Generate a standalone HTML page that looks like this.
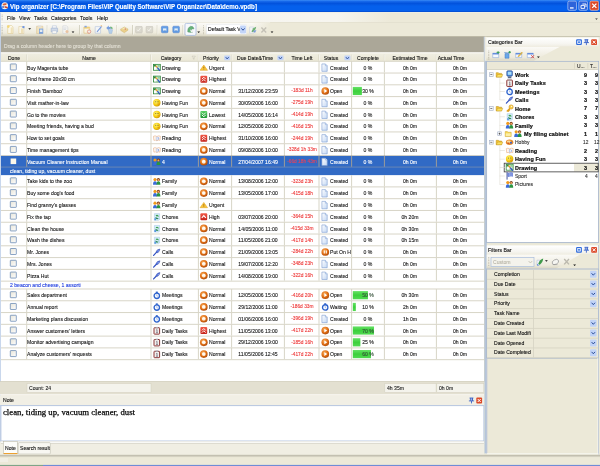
<!DOCTYPE html>
<html><head><meta charset="utf-8"><title>Vip organizer</title>
<style>
html,body{margin:0;padding:0;background:#ece9d8;}
body{width:600px;height:466px;overflow:hidden;position:relative;font-family:"Liberation Sans",sans-serif;font-size:5.6px;color:#1a1a1a;line-height:1;}
svg{position:absolute;left:0;top:0;}
#tx{position:absolute;left:0;top:0;width:600px;height:466px;will-change:transform;}
.t{position:absolute;white-space:nowrap;transform:scaleX(0.91);transform-origin:0 0;-webkit-text-stroke:0.12px;}
.c{transform:translateX(-50%) scaleX(0.91);transform-origin:50% 0;}
</style></head><body>
<svg width="600" height="466" viewBox="0 0 600 466">
<rect x="0.00" y="0.00" width="600.00" height="466.00" fill="#ece9d8"/>
<defs><linearGradient id="tb" x1="0" y1="0" x2="0" y2="1"><stop offset="0" stop-color="#3a8cf6"/><stop offset="0.12" stop-color="#1668ea"/><stop offset="0.28" stop-color="#0252dc"/><stop offset="0.5" stop-color="#0560ec"/><stop offset="0.88" stop-color="#0560ec"/><stop offset="1" stop-color="#0447c8"/></linearGradient><linearGradient id="mn" x1="0" y1="0" x2="1" y2="0"><stop offset="0" stop-color="#f7f6f1"/><stop offset="0.86" stop-color="#f6f5ef"/><stop offset="1" stop-color="#ece9d8"/></linearGradient><linearGradient id="fd" x1="0" y1="0" x2="1" y2="0"><stop offset="0" stop-color="#ece9d8" stop-opacity="0"/><stop offset="1" stop-color="#ece9d8"/></linearGradient><linearGradient id="tl" x1="0" y1="0" x2="0" y2="1"><stop offset="0" stop-color="#fbfaf7"/><stop offset="0.75" stop-color="#eeebdd"/><stop offset="1" stop-color="#d9d5c2"/></linearGradient><linearGradient id="pt" x1="0" y1="0" x2="0" y2="1"><stop offset="0" stop-color="#ffffff"/><stop offset="0.7" stop-color="#f6f5f0"/><stop offset="1" stop-color="#efede2"/></linearGradient><linearGradient id="hd" x1="0" y1="0" x2="0" y2="1"><stop offset="0" stop-color="#faf9f4"/><stop offset="0.2" stop-color="#efede0"/><stop offset="0.85" stop-color="#ebe8d7"/><stop offset="1" stop-color="#cfccba"/></linearGradient><radialGradient id="or" cx="0.4" cy="0.35" r="0.7"><stop offset="0" stop-color="#f9b060"/><stop offset="0.6" stop-color="#df6c12"/><stop offset="1" stop-color="#a8480a"/></radialGradient><radialGradient id="ye" cx="0.4" cy="0.35" r="0.7"><stop offset="0" stop-color="#fff678"/><stop offset="0.65" stop-color="#f4c808"/><stop offset="1" stop-color="#c89200"/></radialGradient><linearGradient id="rd" x1="0" y1="0" x2="0" y2="1"><stop offset="0" stop-color="#f25a48"/><stop offset="1" stop-color="#c4221a"/></linearGradient><linearGradient id="gr" x1="0" y1="0" x2="0" y2="1"><stop offset="0" stop-color="#58d064"/><stop offset="1" stop-color="#1e9632"/></linearGradient><linearGradient id="pb" x1="0" y1="0" x2="0" y2="1"><stop offset="0" stop-color="#66e266"/><stop offset="0.5" stop-color="#3cd03c"/><stop offset="1" stop-color="#52da52"/></linearGradient><linearGradient id="cbx" x1="0" y1="0" x2="1" y2="1"><stop offset="0" stop-color="#e6e4d8"/><stop offset="1" stop-color="#ffffff"/></linearGradient><linearGradient id="pg" x1="0" y1="0" x2="1" y2="1"><stop offset="0" stop-color="#ffffff"/><stop offset="1" stop-color="#c4d8f4"/></linearGradient></defs>
<rect x="0.00" y="0.00" width="600.00" height="12.10" fill="url(#tb)"/>
<rect x="0.00" y="12.00" width="600.00" height="0.80" fill="#f8f8f4"/>
<g transform="translate(1.50 2.00)"><ellipse cx="3.3" cy="3.8" rx="3.3" ry="3.5" fill="#f4f0ea"/><path d="M1 2.2 Q3 0.6 5.4 1.6 L4.6 3 L2 3.4 Z" fill="#d8603a"/><path d="M3.2 4 L6.4 5 L5.8 6.4 L3 5.4 Z" fill="#c8402a"/><circle cx="1.6" cy="5" r="1.1" fill="#5a78c8"/></g>
<rect x="567.80" y="1.10" width="8.70" height="9.20" fill="#2d63da" rx="1.4" stroke="#cfdcf8" stroke-width="0.6"/>
<rect x="578.80" y="1.10" width="8.70" height="9.20" fill="#2d63da" rx="1.4" stroke="#cfdcf8" stroke-width="0.6"/>
<rect x="589.90" y="1.10" width="8.70" height="9.20" fill="#dc4a2a" rx="1.4" stroke="#f6d8cc" stroke-width="0.6"/>
<rect x="570.00" y="7.30" width="3.60" height="1.30" fill="#ffffff"/>
<path d="M582.4 4 H586 V7 M581 5.4 H584.6 V8.4 H581 Z" fill="none" stroke="#fff" stroke-width="0.9"/>
<path d="M592.2 3.6 L596.4 7.9 M596.4 3.6 L592.2 7.9" stroke="#fff" stroke-width="1.3"/>
<rect x="0.00" y="12.50" width="600.00" height="9.80" fill="#ece9d8"/>
<rect x="0.00" y="12.70" width="392.00" height="9.50" fill="url(#mn)"/>
<rect x="0.00" y="22.10" width="600.00" height="0.60" fill="#d8d5c4"/>
<rect x="1.70" y="14.60" width="0.80" height="0.80" fill="#a8a594"/>
<rect x="1.70" y="16.20" width="0.80" height="0.80" fill="#a8a594"/>
<rect x="1.70" y="17.80" width="0.80" height="0.80" fill="#a8a594"/>
<rect x="1.70" y="19.40" width="0.80" height="0.80" fill="#a8a594"/>
<path d="M595.2 18.4 H597.8 L596.5 19.8 Z" fill="#222"/>
<rect x="0.00" y="22.60" width="600.00" height="13.60" fill="#ece9d8"/>
<rect x="0.00" y="22.60" width="270.00" height="13.60" fill="url(#tl)"/>
<rect x="252.00" y="22.60" width="18.20" height="13.60" fill="url(#fd)"/>
<rect x="0.00" y="36.00" width="600.00" height="1.00" fill="#c2beab"/>
<rect x="1.70" y="25.40" width="0.80" height="0.80" fill="#a8a594"/>
<rect x="1.70" y="27.00" width="0.80" height="0.80" fill="#a8a594"/>
<rect x="1.70" y="28.60" width="0.80" height="0.80" fill="#a8a594"/>
<rect x="1.70" y="30.20" width="0.80" height="0.80" fill="#a8a594"/>
<rect x="1.70" y="31.80" width="0.80" height="0.80" fill="#a8a594"/>
<rect x="1.70" y="33.40" width="0.80" height="0.80" fill="#a8a594"/>
<g transform="translate(6.70 25.00)" opacity="0.72"><path d="M1 0.5 H5 L6.3 2 V8.5 H1 Z" fill="#fffbea" stroke="#d9c07a" stroke-width="0.6"/><path d="M4 2.4 H5.8 V8 H4 Z" fill="#ecd79a" opacity=".8"/><circle cx="1.6" cy="1.6" r="1.3" fill="#f4cc4a"/></g>
<g transform="translate(18.00 25.00)" opacity="0.72"><path d="M0.8 1.5 H4.6 L5.8 2.8 V8.5 H0.8 Z" fill="#fdf8e6" stroke="#d6bf86" stroke-width="0.6"/><path d="M3 3.6 H5 V8 H3 Z" fill="#ead49a" opacity=".8"/><path d="M3.8 2.2 Q5 0.2 6.8 1.6 L6.2 3.4 Z" fill="#3a6fd8"/></g>
<path d="M28.30 28.20 H31.10 L29.70 29.70 Z" fill="#111"/>
<g transform="translate(35.80 25.00)" opacity="0.72"><path d="M0.8 1.2 H7 V8.6 H0.8 Z" fill="#f2deb0" stroke="#c8aa70" stroke-width="0.5"/><path d="M2.4 0.4 H5.4 V2 H2.4 Z" fill="#d8d8d8"/><path d="M3.2 3.6 H7.4 V8.8 H3.2 Z" fill="#4f86dc"/><path d="M4 4.6 H6.6 V7 H4 Z" fill="#dfeafa"/></g>
<rect x="46.80" y="25.00" width="0.70" height="9.50" fill="#c9c6b4"/>
<rect x="47.50" y="25.00" width="0.60" height="9.50" fill="#fbfaf6"/>
<g transform="translate(50.80 25.20)" opacity="0.72"><path d="M1.6 0.6 H5.6 V3 H1.6 Z" fill="#fff" stroke="#8ca4cc" stroke-width="0.5"/><path d="M0.4 3 H6.8 V6.6 H0.4 Z" fill="#c5d2ea" stroke="#6f8cc4" stroke-width="0.5"/><path d="M1.4 5.6 H5.8 V8.2 H1.4 Z" fill="#fff" stroke="#8ca4cc" stroke-width="0.5"/></g>
<g transform="translate(62.00 25.00)" opacity="0.72"><path d="M0.8 0.8 H4.6 L5.8 2 V8.4 H0.8 Z" fill="#f6f6f4" stroke="#b8bccc" stroke-width="0.5"/><circle cx="5" cy="6.4" r="1.5" fill="#e8b48a"/><path d="M1.6 3 H4.4 M1.6 4.4 H4" stroke="#a8b4cc" stroke-width="0.5"/></g>
<path d="M71.60 31.60 H74.40 L73.00 33.10 Z" fill="#111"/>
<rect x="79.30" y="25.00" width="0.70" height="9.50" fill="#c9c6b4"/>
<rect x="80.00" y="25.00" width="0.60" height="9.50" fill="#fbfaf6"/>
<g transform="translate(83.30 25.00)" opacity="0.72"><path d="M0.6 2 H6.4 V8.2 H0.6 Z" fill="#fbf6e0" stroke="#d8a850" stroke-width="0.6"/><path d="M0.6 2 H6.4 V3.6 H0.6 Z" fill="#f2c448"/><circle cx="5.8" cy="6.6" r="1.7" fill="#f4eee8" stroke="#d85a4a" stroke-width="0.7"/><path d="M1.2 0.8 H3.4 V2.4 H1.2 Z" fill="#5a88dc"/></g>
<g transform="translate(94.60 25.00)" opacity="0.72"><path d="M0.6 1.6 H6 V8.2 H0.6 Z" fill="#f6f8fc" stroke="#9ab0d8" stroke-width="0.6"/><path d="M2 6.4 L6.6 1 L7.4 1.8 L2.8 7.2 Z" fill="#4a7ad8"/><path d="M5.6 0.6 L7.4 0.2 L7.6 1.8 Z" fill="#e8a040"/></g>
<g transform="translate(105.80 25.00)" opacity="0.72"><path d="M0.4 3 L3 0.6 L3 2 H5 V4 H3 V5.4 Z" fill="#4a7fdc"/><path d="M7 3.4 L4.6 1.2 V2.6 H3.6" fill="#3aa04a"/><path d="M2.6 4.6 H6.8 L6 8.4 H3.4 Z" fill="#9fc4ee" stroke="#6a94d0" stroke-width="0.4"/><path d="M5.4 1.4 L7.2 3.2 L5.2 4 Z" fill="#3aa04a"/></g>
<rect x="116.00" y="25.00" width="0.70" height="9.50" fill="#c9c6b4"/>
<rect x="116.70" y="25.00" width="0.60" height="9.50" fill="#fbfaf6"/>
<g transform="translate(120.30 26.00)" opacity="0.72"><path d="M0.4 3.2 L4 1 L7.6 3 L4 5.6 Z" fill="#fae9a0" stroke="#b8923a" stroke-width="0.5"/><path d="M0.4 3.2 V4.4 L4 6.8 L7.6 4.2 V3" fill="#e8c46a" stroke="#b8923a" stroke-width="0.4"/><circle cx="5" cy="3" r="0.7" fill="#c84a3a"/></g>
<rect x="132.30" y="25.00" width="0.70" height="9.50" fill="#c9c6b4"/>
<rect x="133.00" y="25.00" width="0.60" height="9.50" fill="#fbfaf6"/>
<g transform="translate(135.30 26.00)" opacity="0.8"><rect x="0.3" y="0.3" width="6.6" height="6.6" rx="0.8" fill="#d6d4ca" stroke="#bebbb0" stroke-width="0.6"/><path d="M1.8 3.6 L3 5 L5.2 2" fill="none" stroke="#f4f3ee" stroke-width="1"/></g>
<g transform="translate(145.80 26.00)" opacity="0.8"><rect x="0.3" y="0.3" width="6.6" height="6.6" rx="0.8" fill="#d6d4ca" stroke="#bebbb0" stroke-width="0.6"/><path d="M1.8 3.6 L3 5 L5.2 2" fill="none" stroke="#f4f3ee" stroke-width="1"/></g>
<rect x="156.80" y="25.00" width="0.70" height="9.50" fill="#c9c6b4"/>
<rect x="157.50" y="25.00" width="0.60" height="9.50" fill="#fbfaf6"/>
<g transform="translate(161.20 26.00)" opacity="0.8"><rect x="0.2" y="0.2" width="6.6" height="6.6" rx="1" fill="#3f8ae6" stroke="#2a62c4" stroke-width="0.5"/><path d="M1.8 2.4 H5.2 V4.8 H1.8 Z" fill="#dcecfc"/><path d="M2.4 4.8 H4.6" stroke="#2a62c4" stroke-width="0.6"/></g>
<g transform="translate(172.60 26.00)" opacity="0.8"><rect x="0.2" y="0.2" width="6.6" height="6.6" rx="1" fill="#3f8ae6" stroke="#2a62c4" stroke-width="0.5"/><path d="M1.8 2.4 H5.2 V4.8 H1.8 Z" fill="#dcecfc"/><path d="M2.4 4.8 H4.6" stroke="#2a62c4" stroke-width="0.6"/></g>
<rect x="182.60" y="25.00" width="0.70" height="9.50" fill="#c9c6b4"/>
<rect x="183.30" y="25.00" width="0.60" height="9.50" fill="#fbfaf6"/>
<rect x="185.00" y="23.40" width="11.00" height="12.00" fill="#f6f8fc" rx="1.3" stroke="#9bb0d8" stroke-width="0.7"/>
<g transform="translate(186.80 25.40)" opacity="0.72"><path d="M1 6.6 Q0.4 2 3.6 1 Q6.6 0.6 7.2 3.4 Q5.4 3 4.6 4.4 L5.4 7.2 Z" fill="#2f9a48" stroke="#1e6a30" stroke-width="0.5"/><path d="M3.2 4.2 L6.4 5.6 L4.4 7.4 Z" fill="#f2f6f2"/></g>
<path d="M197.30 31.60 H200.10 L198.70 33.10 Z" fill="#111"/>
<rect x="203.20" y="25.40" width="0.80" height="0.80" fill="#b4b1a0"/>
<rect x="203.20" y="27.00" width="0.80" height="0.80" fill="#b4b1a0"/>
<rect x="203.20" y="28.60" width="0.80" height="0.80" fill="#b4b1a0"/>
<rect x="203.20" y="30.20" width="0.80" height="0.80" fill="#b4b1a0"/>
<rect x="203.20" y="31.80" width="0.80" height="0.80" fill="#b4b1a0"/>
<rect x="203.20" y="33.40" width="0.80" height="0.80" fill="#b4b1a0"/>
<rect x="206.60" y="24.80" width="39.60" height="9.20" fill="#ffffff" stroke="#e4e8f0" stroke-width="0.5"/>
<rect x="240.00" y="25.40" width="6.00" height="8.00" fill="#c3d5f8" rx="0.8"/>
<path d="M241.4 28.4 L243 30.2 L244.6 28.4" fill="none" stroke="#2c4f9a" stroke-width="1"/>
<g transform="translate(249.00 25.60)" opacity="0.72"><path d="M0.6 1.4 H4.6 V7.6 H0.6 Z" fill="#f4f6fa" stroke="#a8b8d8" stroke-width="0.5"/><path d="M2.4 5.8 Q4 2 7.2 1.2 Q7 4.6 3.8 6.6 Z" fill="#3f9a4a"/><path d="M4 5.4 L7.4 4.4 L6 7.4 Z" fill="#4a7ad8"/></g>
<path d="M261.4 27.6 L266.2 32.6 M266.2 27.6 L261.4 32.6" stroke="#c4c1b6" stroke-width="1.4"/>
<path d="M270.60 31.60 H273.40 L272.00 33.10 Z" fill="#111"/>
<rect x="0.00" y="36.80" width="484.40" height="15.80" fill="#aba798"/>
<rect x="0.00" y="52.50" width="484.40" height="329.00" fill="#ffffff"/>
<rect x="0.00" y="52.50" width="484.40" height="9.20" fill="url(#hd)"/>
<rect x="26.20" y="54.50" width="0.60" height="6.00" fill="#d2cfbe"/>
<rect x="26.80" y="54.50" width="0.60" height="6.00" fill="#fbfaf6"/>
<rect x="150.50" y="54.50" width="0.60" height="6.00" fill="#d2cfbe"/>
<rect x="151.10" y="54.50" width="0.60" height="6.00" fill="#fbfaf6"/>
<rect x="197.90" y="54.50" width="0.60" height="6.00" fill="#d2cfbe"/>
<rect x="198.50" y="54.50" width="0.60" height="6.00" fill="#fbfaf6"/>
<rect x="231.10" y="54.50" width="0.60" height="6.00" fill="#d2cfbe"/>
<rect x="231.70" y="54.50" width="0.60" height="6.00" fill="#fbfaf6"/>
<rect x="283.90" y="54.50" width="0.60" height="6.00" fill="#d2cfbe"/>
<rect x="284.50" y="54.50" width="0.60" height="6.00" fill="#fbfaf6"/>
<rect x="318.50" y="54.50" width="0.60" height="6.00" fill="#d2cfbe"/>
<rect x="319.10" y="54.50" width="0.60" height="6.00" fill="#fbfaf6"/>
<rect x="351.10" y="54.50" width="0.60" height="6.00" fill="#d2cfbe"/>
<rect x="351.70" y="54.50" width="0.60" height="6.00" fill="#fbfaf6"/>
<rect x="383.90" y="54.50" width="0.60" height="6.00" fill="#d2cfbe"/>
<rect x="384.50" y="54.50" width="0.60" height="6.00" fill="#fbfaf6"/>
<rect x="435.90" y="54.50" width="0.60" height="6.00" fill="#d2cfbe"/>
<rect x="436.50" y="54.50" width="0.60" height="6.00" fill="#fbfaf6"/>
<rect x="224.20" y="55.60" width="6.00" height="4.60" fill="#c1d3f7" rx="0.8"/>
<path d="M225.70 57.10 L227.20 59.00 L228.70 57.10" fill="none" stroke="#2c4f9a" stroke-width="0.9"/>
<rect x="277.40" y="55.60" width="6.00" height="4.60" fill="#c1d3f7" rx="0.8"/>
<path d="M278.90 57.10 L280.40 59.00 L281.90 57.10" fill="none" stroke="#2c4f9a" stroke-width="0.9"/>
<rect x="344.40" y="55.60" width="6.00" height="4.60" fill="#c1d3f7" rx="0.8"/>
<path d="M345.90 57.10 L347.40 59.00 L348.90 57.10" fill="none" stroke="#2c4f9a" stroke-width="0.9"/>
<path d="M192 56.2 H195.4 L194.1 57.8 V59.4 L193.3 59 V57.8 Z" fill="#f2f0e6" stroke="#bdb9a8" stroke-width="0.45"/>
<rect x="0.90" y="72.53" width="483.50" height="1.00" fill="#d8d5c7"/>
<rect x="26.20" y="61.25" width="1.00" height="11.28" fill="#d8d5c7"/>
<rect x="150.50" y="61.25" width="1.00" height="11.28" fill="#d8d5c7"/>
<rect x="197.90" y="61.25" width="1.00" height="11.28" fill="#d8d5c7"/>
<rect x="231.10" y="61.25" width="1.00" height="11.28" fill="#d8d5c7"/>
<rect x="283.90" y="61.25" width="1.00" height="11.28" fill="#d8d5c7"/>
<rect x="318.50" y="61.25" width="1.00" height="11.28" fill="#d8d5c7"/>
<rect x="351.10" y="61.25" width="1.00" height="11.28" fill="#d8d5c7"/>
<rect x="383.90" y="61.25" width="1.00" height="11.28" fill="#d8d5c7"/>
<rect x="435.90" y="61.25" width="1.00" height="11.28" fill="#d8d5c7"/>
<rect x="10.30" y="63.95" width="6.00" height="6.00" fill="url(#cbx)" rx="0.5" stroke="#6486b2" stroke-width="0.75"/>
<g transform="translate(153.00 63.85)"><rect x="0.4" y="0.5" width="6.9" height="5.9" fill="#d9efd9" stroke="#2a8434" stroke-width="0.8"/><path d="M0.8 0.9 H3 V2.6 H0.8 Z" fill="#2f8a3c"/><path d="M1 3.4 H3.4 V5.8 H1 Z" fill="#ffffff"/><path d="M4.6 0.9 H6.9 V3 H4.6 Z" fill="#8fd09a"/><path d="M2.6 1.8 L4.6 4" stroke="#e89a30" stroke-width="1.3"/><path d="M4.4 3.8 L7 7" stroke="#2c55c0" stroke-width="1.3"/></g>
<g transform="translate(199.90 63.75)"><path d="M3.9 1.3 L7.6 6.5 H0.2 Z" fill="#f9c63a" stroke="#e0a428" stroke-width="0.6" stroke-linejoin="round"/><path d="M3.9 3 V4.6 M3.9 5.1 V5.7" stroke="#9a5e08" stroke-width="0.8"/></g>
<g transform="translate(321.40 63.55)"><path d="M0.5 0.4 H4 L5.8 2.2 V7.8 H0.5 Z" fill="url(#pg)" stroke="#7c9cd0" stroke-width="0.6"/><path d="M4 0.4 V2.2 H5.8" fill="#eaf2fc" stroke="#7c9cd0" stroke-width="0.5"/></g>
<rect x="0.90" y="84.31" width="483.50" height="1.00" fill="#d8d5c7"/>
<rect x="26.20" y="73.03" width="1.00" height="11.28" fill="#d8d5c7"/>
<rect x="150.50" y="73.03" width="1.00" height="11.28" fill="#d8d5c7"/>
<rect x="197.90" y="73.03" width="1.00" height="11.28" fill="#d8d5c7"/>
<rect x="231.10" y="73.03" width="1.00" height="11.28" fill="#d8d5c7"/>
<rect x="283.90" y="73.03" width="1.00" height="11.28" fill="#d8d5c7"/>
<rect x="318.50" y="73.03" width="1.00" height="11.28" fill="#d8d5c7"/>
<rect x="351.10" y="73.03" width="1.00" height="11.28" fill="#d8d5c7"/>
<rect x="383.90" y="73.03" width="1.00" height="11.28" fill="#d8d5c7"/>
<rect x="435.90" y="73.03" width="1.00" height="11.28" fill="#d8d5c7"/>
<rect x="10.30" y="75.73" width="6.00" height="6.00" fill="url(#cbx)" rx="0.5" stroke="#6486b2" stroke-width="0.75"/>
<g transform="translate(153.00 75.63)"><rect x="0.4" y="0.5" width="6.9" height="5.9" fill="#d9efd9" stroke="#2a8434" stroke-width="0.8"/><path d="M0.8 0.9 H3 V2.6 H0.8 Z" fill="#2f8a3c"/><path d="M1 3.4 H3.4 V5.8 H1 Z" fill="#ffffff"/><path d="M4.6 0.9 H6.9 V3 H4.6 Z" fill="#8fd09a"/><path d="M2.6 1.8 L4.6 4" stroke="#e89a30" stroke-width="1.3"/><path d="M4.4 3.8 L7 7" stroke="#2c55c0" stroke-width="1.3"/></g>
<g transform="translate(199.90 75.53)"><rect x="0.5" y="0.2" width="6.8" height="7" rx="1" fill="url(#rd)"/><path d="M2 3.6 L3.9 1.7 L5.8 3.6 M2 5.8 L3.9 3.9 L5.8 5.8" fill="none" stroke="#fff" stroke-width="0.95"/></g>
<g transform="translate(321.40 75.33)"><path d="M0.5 0.4 H4 L5.8 2.2 V7.8 H0.5 Z" fill="url(#pg)" stroke="#7c9cd0" stroke-width="0.6"/><path d="M4 0.4 V2.2 H5.8" fill="#eaf2fc" stroke="#7c9cd0" stroke-width="0.5"/></g>
<rect x="0.90" y="96.09" width="483.50" height="1.00" fill="#d8d5c7"/>
<rect x="26.20" y="84.81" width="1.00" height="11.28" fill="#d8d5c7"/>
<rect x="150.50" y="84.81" width="1.00" height="11.28" fill="#d8d5c7"/>
<rect x="197.90" y="84.81" width="1.00" height="11.28" fill="#d8d5c7"/>
<rect x="231.10" y="84.81" width="1.00" height="11.28" fill="#d8d5c7"/>
<rect x="283.90" y="84.81" width="1.00" height="11.28" fill="#d8d5c7"/>
<rect x="318.50" y="84.81" width="1.00" height="11.28" fill="#d8d5c7"/>
<rect x="351.10" y="84.81" width="1.00" height="11.28" fill="#d8d5c7"/>
<rect x="383.90" y="84.81" width="1.00" height="11.28" fill="#d8d5c7"/>
<rect x="435.90" y="84.81" width="1.00" height="11.28" fill="#d8d5c7"/>
<rect x="10.30" y="87.51" width="6.00" height="6.00" fill="url(#cbx)" rx="0.5" stroke="#6486b2" stroke-width="0.75"/>
<g transform="translate(153.00 87.41)"><rect x="0.4" y="0.5" width="6.9" height="5.9" fill="#d9efd9" stroke="#2a8434" stroke-width="0.8"/><path d="M0.8 0.9 H3 V2.6 H0.8 Z" fill="#2f8a3c"/><path d="M1 3.4 H3.4 V5.8 H1 Z" fill="#ffffff"/><path d="M4.6 0.9 H6.9 V3 H4.6 Z" fill="#8fd09a"/><path d="M2.6 1.8 L4.6 4" stroke="#e89a30" stroke-width="1.3"/><path d="M4.4 3.8 L7 7" stroke="#2c55c0" stroke-width="1.3"/></g>
<g transform="translate(199.90 87.31)"><circle cx="3.9" cy="3.7" r="3.85" fill="url(#or)"/><circle cx="3.9" cy="3.7" r="1.85" fill="#fffaf2"/><path d="M2.4 4.4 Q3.9 6 5.4 4.4 Q3.9 5 2.4 4.4 Z" fill="#f8d0a8"/></g>
<g transform="translate(321.40 87.31)"><circle cx="3.9" cy="3.7" r="3.85" fill="url(#or)"/><path d="M2.9 1.8 L5.8 3.7 L2.9 5.6 Z" fill="#fff"/></g>
<rect x="352.80" y="86.91" width="9.09" height="8.18" fill="url(#pb)"/>
<rect x="0.90" y="107.87" width="483.50" height="1.00" fill="#d8d5c7"/>
<rect x="26.20" y="96.59" width="1.00" height="11.28" fill="#d8d5c7"/>
<rect x="150.50" y="96.59" width="1.00" height="11.28" fill="#d8d5c7"/>
<rect x="197.90" y="96.59" width="1.00" height="11.28" fill="#d8d5c7"/>
<rect x="231.10" y="96.59" width="1.00" height="11.28" fill="#d8d5c7"/>
<rect x="283.90" y="96.59" width="1.00" height="11.28" fill="#d8d5c7"/>
<rect x="318.50" y="96.59" width="1.00" height="11.28" fill="#d8d5c7"/>
<rect x="351.10" y="96.59" width="1.00" height="11.28" fill="#d8d5c7"/>
<rect x="383.90" y="96.59" width="1.00" height="11.28" fill="#d8d5c7"/>
<rect x="435.90" y="96.59" width="1.00" height="11.28" fill="#d8d5c7"/>
<rect x="10.30" y="99.29" width="6.00" height="6.00" fill="url(#cbx)" rx="0.5" stroke="#6486b2" stroke-width="0.75"/>
<g transform="translate(153.00 99.19)"><circle cx="3.8" cy="3.6" r="3.7" fill="url(#ye)"/><circle cx="2.8" cy="2.6" r="0.5" fill="#5a4a10"/><circle cx="5" cy="2.6" r="0.5" fill="#5a4a10"/><path d="M4.6 4.8 Q5.6 5.4 6 4.4" fill="none" stroke="#c8503a" stroke-width="0.6"/></g>
<g transform="translate(199.90 99.09)"><circle cx="3.9" cy="3.7" r="3.85" fill="url(#or)"/><circle cx="3.9" cy="3.7" r="1.85" fill="#fffaf2"/><path d="M2.4 4.4 Q3.9 6 5.4 4.4 Q3.9 5 2.4 4.4 Z" fill="#f8d0a8"/></g>
<g transform="translate(321.40 98.89)"><path d="M0.5 0.4 H4 L5.8 2.2 V7.8 H0.5 Z" fill="url(#pg)" stroke="#7c9cd0" stroke-width="0.6"/><path d="M4 0.4 V2.2 H5.8" fill="#eaf2fc" stroke="#7c9cd0" stroke-width="0.5"/></g>
<rect x="0.90" y="119.65" width="483.50" height="1.00" fill="#d8d5c7"/>
<rect x="26.20" y="108.37" width="1.00" height="11.28" fill="#d8d5c7"/>
<rect x="150.50" y="108.37" width="1.00" height="11.28" fill="#d8d5c7"/>
<rect x="197.90" y="108.37" width="1.00" height="11.28" fill="#d8d5c7"/>
<rect x="231.10" y="108.37" width="1.00" height="11.28" fill="#d8d5c7"/>
<rect x="283.90" y="108.37" width="1.00" height="11.28" fill="#d8d5c7"/>
<rect x="318.50" y="108.37" width="1.00" height="11.28" fill="#d8d5c7"/>
<rect x="351.10" y="108.37" width="1.00" height="11.28" fill="#d8d5c7"/>
<rect x="383.90" y="108.37" width="1.00" height="11.28" fill="#d8d5c7"/>
<rect x="435.90" y="108.37" width="1.00" height="11.28" fill="#d8d5c7"/>
<rect x="10.30" y="111.07" width="6.00" height="6.00" fill="url(#cbx)" rx="0.5" stroke="#6486b2" stroke-width="0.75"/>
<g transform="translate(153.00 110.97)"><circle cx="3.8" cy="3.6" r="3.7" fill="url(#ye)"/><circle cx="2.8" cy="2.6" r="0.5" fill="#5a4a10"/><circle cx="5" cy="2.6" r="0.5" fill="#5a4a10"/><path d="M4.6 4.8 Q5.6 5.4 6 4.4" fill="none" stroke="#c8503a" stroke-width="0.6"/></g>
<g transform="translate(199.90 110.87)"><rect x="0.5" y="0.2" width="6.8" height="7" rx="1" fill="url(#gr)"/><path d="M2 1.8 L3.9 3.7 L5.8 1.8 M2 4 L3.9 5.9 L5.8 4" fill="none" stroke="#fff" stroke-width="0.95"/></g>
<g transform="translate(321.40 110.67)"><path d="M0.5 0.4 H4 L5.8 2.2 V7.8 H0.5 Z" fill="url(#pg)" stroke="#7c9cd0" stroke-width="0.6"/><path d="M4 0.4 V2.2 H5.8" fill="#eaf2fc" stroke="#7c9cd0" stroke-width="0.5"/></g>
<rect x="0.90" y="131.43" width="483.50" height="1.00" fill="#d8d5c7"/>
<rect x="26.20" y="120.15" width="1.00" height="11.28" fill="#d8d5c7"/>
<rect x="150.50" y="120.15" width="1.00" height="11.28" fill="#d8d5c7"/>
<rect x="197.90" y="120.15" width="1.00" height="11.28" fill="#d8d5c7"/>
<rect x="231.10" y="120.15" width="1.00" height="11.28" fill="#d8d5c7"/>
<rect x="283.90" y="120.15" width="1.00" height="11.28" fill="#d8d5c7"/>
<rect x="318.50" y="120.15" width="1.00" height="11.28" fill="#d8d5c7"/>
<rect x="351.10" y="120.15" width="1.00" height="11.28" fill="#d8d5c7"/>
<rect x="383.90" y="120.15" width="1.00" height="11.28" fill="#d8d5c7"/>
<rect x="435.90" y="120.15" width="1.00" height="11.28" fill="#d8d5c7"/>
<rect x="10.30" y="122.85" width="6.00" height="6.00" fill="url(#cbx)" rx="0.5" stroke="#6486b2" stroke-width="0.75"/>
<g transform="translate(153.00 122.75)"><circle cx="3.8" cy="3.6" r="3.7" fill="url(#ye)"/><circle cx="2.8" cy="2.6" r="0.5" fill="#5a4a10"/><circle cx="5" cy="2.6" r="0.5" fill="#5a4a10"/><path d="M4.6 4.8 Q5.6 5.4 6 4.4" fill="none" stroke="#c8503a" stroke-width="0.6"/></g>
<g transform="translate(199.90 122.65)"><circle cx="3.9" cy="3.7" r="3.85" fill="url(#or)"/><circle cx="3.9" cy="3.7" r="1.85" fill="#fffaf2"/><path d="M2.4 4.4 Q3.9 6 5.4 4.4 Q3.9 5 2.4 4.4 Z" fill="#f8d0a8"/></g>
<g transform="translate(321.40 122.45)"><path d="M0.5 0.4 H4 L5.8 2.2 V7.8 H0.5 Z" fill="url(#pg)" stroke="#7c9cd0" stroke-width="0.6"/><path d="M4 0.4 V2.2 H5.8" fill="#eaf2fc" stroke="#7c9cd0" stroke-width="0.5"/></g>
<rect x="0.90" y="143.21" width="483.50" height="1.00" fill="#d8d5c7"/>
<rect x="26.20" y="131.93" width="1.00" height="11.28" fill="#d8d5c7"/>
<rect x="150.50" y="131.93" width="1.00" height="11.28" fill="#d8d5c7"/>
<rect x="197.90" y="131.93" width="1.00" height="11.28" fill="#d8d5c7"/>
<rect x="231.10" y="131.93" width="1.00" height="11.28" fill="#d8d5c7"/>
<rect x="283.90" y="131.93" width="1.00" height="11.28" fill="#d8d5c7"/>
<rect x="318.50" y="131.93" width="1.00" height="11.28" fill="#d8d5c7"/>
<rect x="351.10" y="131.93" width="1.00" height="11.28" fill="#d8d5c7"/>
<rect x="383.90" y="131.93" width="1.00" height="11.28" fill="#d8d5c7"/>
<rect x="435.90" y="131.93" width="1.00" height="11.28" fill="#d8d5c7"/>
<rect x="10.30" y="134.63" width="6.00" height="6.00" fill="url(#cbx)" rx="0.5" stroke="#6486b2" stroke-width="0.75"/>
<g transform="translate(153.00 134.53)"><path d="M0.5 1.8 Q2 0.8 3.9 2 Q5.8 0.8 7.4 1.8 L6.9 5.8 Q5.4 5 3.9 6.2 Q2.4 5 0.9 5.8 Z" fill="#ffffff" stroke="#e6a878" stroke-width="0.6"/><path d="M3.9 2.2 V6" stroke="#7a98d8" stroke-width="0.6"/><path d="M1.6 3 Q2.4 2.6 3.2 3.2 M1.7 4.2 Q2.5 3.8 3.2 4.4" stroke="#f0c8a8" stroke-width="0.4" fill="none"/><path d="M5 2.6 Q6.2 3.6 5.4 5" stroke="#6a8ad8" stroke-width="0.7" fill="none"/></g>
<g transform="translate(199.90 134.43)"><rect x="0.5" y="0.2" width="6.8" height="7" rx="1" fill="url(#rd)"/><path d="M2 3.6 L3.9 1.7 L5.8 3.6 M2 5.8 L3.9 3.9 L5.8 5.8" fill="none" stroke="#fff" stroke-width="0.95"/></g>
<g transform="translate(321.40 134.23)"><path d="M0.5 0.4 H4 L5.8 2.2 V7.8 H0.5 Z" fill="url(#pg)" stroke="#7c9cd0" stroke-width="0.6"/><path d="M4 0.4 V2.2 H5.8" fill="#eaf2fc" stroke="#7c9cd0" stroke-width="0.5"/></g>
<rect x="0.90" y="154.99" width="483.50" height="1.00" fill="#d8d5c7"/>
<rect x="26.20" y="143.71" width="1.00" height="11.28" fill="#d8d5c7"/>
<rect x="150.50" y="143.71" width="1.00" height="11.28" fill="#d8d5c7"/>
<rect x="197.90" y="143.71" width="1.00" height="11.28" fill="#d8d5c7"/>
<rect x="231.10" y="143.71" width="1.00" height="11.28" fill="#d8d5c7"/>
<rect x="283.90" y="143.71" width="1.00" height="11.28" fill="#d8d5c7"/>
<rect x="318.50" y="143.71" width="1.00" height="11.28" fill="#d8d5c7"/>
<rect x="351.10" y="143.71" width="1.00" height="11.28" fill="#d8d5c7"/>
<rect x="383.90" y="143.71" width="1.00" height="11.28" fill="#d8d5c7"/>
<rect x="435.90" y="143.71" width="1.00" height="11.28" fill="#d8d5c7"/>
<rect x="10.30" y="146.41" width="6.00" height="6.00" fill="url(#cbx)" rx="0.5" stroke="#6486b2" stroke-width="0.75"/>
<g transform="translate(153.00 146.31)"><path d="M0.5 1.8 Q2 0.8 3.9 2 Q5.8 0.8 7.4 1.8 L6.9 5.8 Q5.4 5 3.9 6.2 Q2.4 5 0.9 5.8 Z" fill="#ffffff" stroke="#e6a878" stroke-width="0.6"/><path d="M3.9 2.2 V6" stroke="#7a98d8" stroke-width="0.6"/><path d="M1.6 3 Q2.4 2.6 3.2 3.2 M1.7 4.2 Q2.5 3.8 3.2 4.4" stroke="#f0c8a8" stroke-width="0.4" fill="none"/><path d="M5 2.6 Q6.2 3.6 5.4 5" stroke="#6a8ad8" stroke-width="0.7" fill="none"/></g>
<g transform="translate(199.90 146.21)"><circle cx="3.9" cy="3.7" r="3.85" fill="url(#or)"/><circle cx="3.9" cy="3.7" r="1.85" fill="#fffaf2"/><path d="M2.4 4.4 Q3.9 6 5.4 4.4 Q3.9 5 2.4 4.4 Z" fill="#f8d0a8"/></g>
<g transform="translate(321.40 146.01)"><path d="M0.5 0.4 H4 L5.8 2.2 V7.8 H0.5 Z" fill="url(#pg)" stroke="#7c9cd0" stroke-width="0.6"/><path d="M4 0.4 V2.2 H5.8" fill="#eaf2fc" stroke="#7c9cd0" stroke-width="0.5"/></g>
<rect x="0.90" y="155.94" width="483.50" height="11.33" fill="#316ac5"/>
<rect x="0.90" y="166.77" width="483.50" height="1.00" fill="#9c9c9a"/>
<rect x="26.20" y="155.49" width="1.00" height="11.28" fill="#9c9c9a"/>
<rect x="150.50" y="155.49" width="1.00" height="11.28" fill="#9c9c9a"/>
<rect x="197.90" y="155.49" width="1.00" height="11.28" fill="#9c9c9a"/>
<rect x="231.10" y="155.49" width="1.00" height="11.28" fill="#9c9c9a"/>
<rect x="283.90" y="155.49" width="1.00" height="11.28" fill="#9c9c9a"/>
<rect x="318.50" y="155.49" width="1.00" height="11.28" fill="#9c9c9a"/>
<rect x="351.10" y="155.49" width="1.00" height="11.28" fill="#9c9c9a"/>
<rect x="383.90" y="155.49" width="1.00" height="11.28" fill="#9c9c9a"/>
<rect x="435.90" y="155.49" width="1.00" height="11.28" fill="#9c9c9a"/>
<rect x="10.60" y="158.49" width="5.60" height="5.60" fill="#fbf8ea"/>
<g transform="translate(153.00 158.09)"><circle cx="2" cy="1.9" r="1.6" fill="#f09a1c"/><path d="M0 7 Q0 3.6 2 3.6 Q4 3.6 4 7 Z" fill="#3a6ad8"/><circle cx="5.4" cy="1.9" r="1.6" fill="#7a3a18"/><circle cx="5.4" cy="2.3" r="1" fill="#f0a860"/><path d="M3.5 7 Q3.5 3.6 5.4 3.6 Q7.4 3.6 7.4 7 Z" fill="#2a9440"/></g>
<g transform="translate(199.90 157.99)"><circle cx="3.9" cy="3.7" r="3.85" fill="url(#or)"/><circle cx="3.9" cy="3.7" r="1.85" fill="#fffaf2"/><path d="M2.4 4.4 Q3.9 6 5.4 4.4 Q3.9 5 2.4 4.4 Z" fill="#f8d0a8"/></g>
<g transform="translate(321.40 157.79)"><path d="M0.5 0.4 H4 L5.8 2.2 V7.8 H0.5 Z" fill="url(#pg)" stroke="#7c9cd0" stroke-width="0.6"/><path d="M4 0.4 V2.2 H5.8" fill="#eaf2fc" stroke="#7c9cd0" stroke-width="0.5"/></g>
<rect x="0.90" y="167.27" width="483.50" height="7.85" fill="#316ac5"/>
<rect x="0.90" y="186.40" width="483.50" height="1.00" fill="#d8d5c7"/>
<rect x="26.20" y="175.12" width="1.00" height="11.28" fill="#d8d5c7"/>
<rect x="150.50" y="175.12" width="1.00" height="11.28" fill="#d8d5c7"/>
<rect x="197.90" y="175.12" width="1.00" height="11.28" fill="#d8d5c7"/>
<rect x="231.10" y="175.12" width="1.00" height="11.28" fill="#d8d5c7"/>
<rect x="283.90" y="175.12" width="1.00" height="11.28" fill="#d8d5c7"/>
<rect x="318.50" y="175.12" width="1.00" height="11.28" fill="#d8d5c7"/>
<rect x="351.10" y="175.12" width="1.00" height="11.28" fill="#d8d5c7"/>
<rect x="383.90" y="175.12" width="1.00" height="11.28" fill="#d8d5c7"/>
<rect x="435.90" y="175.12" width="1.00" height="11.28" fill="#d8d5c7"/>
<rect x="10.30" y="177.82" width="6.00" height="6.00" fill="url(#cbx)" rx="0.5" stroke="#6486b2" stroke-width="0.75"/>
<g transform="translate(153.00 177.72)"><circle cx="2" cy="1.9" r="1.6" fill="#f09a1c"/><path d="M0 7 Q0 3.6 2 3.6 Q4 3.6 4 7 Z" fill="#3a6ad8"/><circle cx="5.4" cy="1.9" r="1.6" fill="#7a3a18"/><circle cx="5.4" cy="2.3" r="1" fill="#f0a860"/><path d="M3.5 7 Q3.5 3.6 5.4 3.6 Q7.4 3.6 7.4 7 Z" fill="#2a9440"/></g>
<g transform="translate(199.90 177.62)"><circle cx="3.9" cy="3.7" r="3.85" fill="url(#or)"/><circle cx="3.9" cy="3.7" r="1.85" fill="#fffaf2"/><path d="M2.4 4.4 Q3.9 6 5.4 4.4 Q3.9 5 2.4 4.4 Z" fill="#f8d0a8"/></g>
<g transform="translate(321.40 177.42)"><path d="M0.5 0.4 H4 L5.8 2.2 V7.8 H0.5 Z" fill="url(#pg)" stroke="#7c9cd0" stroke-width="0.6"/><path d="M4 0.4 V2.2 H5.8" fill="#eaf2fc" stroke="#7c9cd0" stroke-width="0.5"/></g>
<rect x="0.90" y="198.18" width="483.50" height="1.00" fill="#d8d5c7"/>
<rect x="26.20" y="186.90" width="1.00" height="11.28" fill="#d8d5c7"/>
<rect x="150.50" y="186.90" width="1.00" height="11.28" fill="#d8d5c7"/>
<rect x="197.90" y="186.90" width="1.00" height="11.28" fill="#d8d5c7"/>
<rect x="231.10" y="186.90" width="1.00" height="11.28" fill="#d8d5c7"/>
<rect x="283.90" y="186.90" width="1.00" height="11.28" fill="#d8d5c7"/>
<rect x="318.50" y="186.90" width="1.00" height="11.28" fill="#d8d5c7"/>
<rect x="351.10" y="186.90" width="1.00" height="11.28" fill="#d8d5c7"/>
<rect x="383.90" y="186.90" width="1.00" height="11.28" fill="#d8d5c7"/>
<rect x="435.90" y="186.90" width="1.00" height="11.28" fill="#d8d5c7"/>
<rect x="10.30" y="189.60" width="6.00" height="6.00" fill="url(#cbx)" rx="0.5" stroke="#6486b2" stroke-width="0.75"/>
<g transform="translate(153.00 189.50)"><circle cx="2" cy="1.9" r="1.6" fill="#f09a1c"/><path d="M0 7 Q0 3.6 2 3.6 Q4 3.6 4 7 Z" fill="#3a6ad8"/><circle cx="5.4" cy="1.9" r="1.6" fill="#7a3a18"/><circle cx="5.4" cy="2.3" r="1" fill="#f0a860"/><path d="M3.5 7 Q3.5 3.6 5.4 3.6 Q7.4 3.6 7.4 7 Z" fill="#2a9440"/></g>
<g transform="translate(199.90 189.40)"><circle cx="3.9" cy="3.7" r="3.85" fill="url(#or)"/><circle cx="3.9" cy="3.7" r="1.85" fill="#fffaf2"/><path d="M2.4 4.4 Q3.9 6 5.4 4.4 Q3.9 5 2.4 4.4 Z" fill="#f8d0a8"/></g>
<g transform="translate(321.40 189.20)"><path d="M0.5 0.4 H4 L5.8 2.2 V7.8 H0.5 Z" fill="url(#pg)" stroke="#7c9cd0" stroke-width="0.6"/><path d="M4 0.4 V2.2 H5.8" fill="#eaf2fc" stroke="#7c9cd0" stroke-width="0.5"/></g>
<rect x="0.90" y="209.96" width="483.50" height="1.00" fill="#d8d5c7"/>
<rect x="26.20" y="198.68" width="1.00" height="11.28" fill="#d8d5c7"/>
<rect x="150.50" y="198.68" width="1.00" height="11.28" fill="#d8d5c7"/>
<rect x="197.90" y="198.68" width="1.00" height="11.28" fill="#d8d5c7"/>
<rect x="231.10" y="198.68" width="1.00" height="11.28" fill="#d8d5c7"/>
<rect x="283.90" y="198.68" width="1.00" height="11.28" fill="#d8d5c7"/>
<rect x="318.50" y="198.68" width="1.00" height="11.28" fill="#d8d5c7"/>
<rect x="351.10" y="198.68" width="1.00" height="11.28" fill="#d8d5c7"/>
<rect x="383.90" y="198.68" width="1.00" height="11.28" fill="#d8d5c7"/>
<rect x="435.90" y="198.68" width="1.00" height="11.28" fill="#d8d5c7"/>
<rect x="10.30" y="201.38" width="6.00" height="6.00" fill="url(#cbx)" rx="0.5" stroke="#6486b2" stroke-width="0.75"/>
<g transform="translate(153.00 201.28)"><circle cx="2" cy="1.9" r="1.6" fill="#f09a1c"/><path d="M0 7 Q0 3.6 2 3.6 Q4 3.6 4 7 Z" fill="#3a6ad8"/><circle cx="5.4" cy="1.9" r="1.6" fill="#7a3a18"/><circle cx="5.4" cy="2.3" r="1" fill="#f0a860"/><path d="M3.5 7 Q3.5 3.6 5.4 3.6 Q7.4 3.6 7.4 7 Z" fill="#2a9440"/></g>
<g transform="translate(199.90 201.18)"><path d="M3.9 1.3 L7.6 6.5 H0.2 Z" fill="#f9c63a" stroke="#e0a428" stroke-width="0.6" stroke-linejoin="round"/><path d="M3.9 3 V4.6 M3.9 5.1 V5.7" stroke="#9a5e08" stroke-width="0.8"/></g>
<g transform="translate(321.40 200.98)"><path d="M0.5 0.4 H4 L5.8 2.2 V7.8 H0.5 Z" fill="url(#pg)" stroke="#7c9cd0" stroke-width="0.6"/><path d="M4 0.4 V2.2 H5.8" fill="#eaf2fc" stroke="#7c9cd0" stroke-width="0.5"/></g>
<rect x="0.90" y="221.74" width="483.50" height="1.00" fill="#d8d5c7"/>
<rect x="26.20" y="210.46" width="1.00" height="11.28" fill="#d8d5c7"/>
<rect x="150.50" y="210.46" width="1.00" height="11.28" fill="#d8d5c7"/>
<rect x="197.90" y="210.46" width="1.00" height="11.28" fill="#d8d5c7"/>
<rect x="231.10" y="210.46" width="1.00" height="11.28" fill="#d8d5c7"/>
<rect x="283.90" y="210.46" width="1.00" height="11.28" fill="#d8d5c7"/>
<rect x="318.50" y="210.46" width="1.00" height="11.28" fill="#d8d5c7"/>
<rect x="351.10" y="210.46" width="1.00" height="11.28" fill="#d8d5c7"/>
<rect x="383.90" y="210.46" width="1.00" height="11.28" fill="#d8d5c7"/>
<rect x="435.90" y="210.46" width="1.00" height="11.28" fill="#d8d5c7"/>
<rect x="10.30" y="213.16" width="6.00" height="6.00" fill="url(#cbx)" rx="0.5" stroke="#6486b2" stroke-width="0.75"/>
<g transform="translate(153.00 213.06)"><path d="M1.4 0.6 H6.6 V6.4 L5.4 7.2 H1.4 Z" fill="#d6ecf8" stroke="#9cc4e4" stroke-width="0.5"/><path d="M2.6 2.4 Q4 1.2 5.4 2.4 L5.8 3.8 L4.6 3.4 Q4 2.8 3.4 3.4 Z" fill="#3aa04e"/><path d="M2.4 4 L3.6 4.4 Q4 5.2 5 4.6 L5.6 5.4 Q4 6.8 2.6 5.4 Z" fill="#2f8a5a"/><path d="M1.4 5.2 H3 V7.2 H1.4 Z" fill="#5a9ae0"/></g>
<g transform="translate(199.90 212.96)"><rect x="0.5" y="0.2" width="6.8" height="7" rx="1" fill="url(#rd)"/><path d="M1.9 4.9 L3.9 2.7 L5.9 4.9" fill="none" stroke="#fff" stroke-width="1.1"/></g>
<g transform="translate(321.40 212.76)"><path d="M0.5 0.4 H4 L5.8 2.2 V7.8 H0.5 Z" fill="url(#pg)" stroke="#7c9cd0" stroke-width="0.6"/><path d="M4 0.4 V2.2 H5.8" fill="#eaf2fc" stroke="#7c9cd0" stroke-width="0.5"/></g>
<rect x="0.90" y="233.52" width="483.50" height="1.00" fill="#d8d5c7"/>
<rect x="26.20" y="222.24" width="1.00" height="11.28" fill="#d8d5c7"/>
<rect x="150.50" y="222.24" width="1.00" height="11.28" fill="#d8d5c7"/>
<rect x="197.90" y="222.24" width="1.00" height="11.28" fill="#d8d5c7"/>
<rect x="231.10" y="222.24" width="1.00" height="11.28" fill="#d8d5c7"/>
<rect x="283.90" y="222.24" width="1.00" height="11.28" fill="#d8d5c7"/>
<rect x="318.50" y="222.24" width="1.00" height="11.28" fill="#d8d5c7"/>
<rect x="351.10" y="222.24" width="1.00" height="11.28" fill="#d8d5c7"/>
<rect x="383.90" y="222.24" width="1.00" height="11.28" fill="#d8d5c7"/>
<rect x="435.90" y="222.24" width="1.00" height="11.28" fill="#d8d5c7"/>
<rect x="10.30" y="224.94" width="6.00" height="6.00" fill="url(#cbx)" rx="0.5" stroke="#6486b2" stroke-width="0.75"/>
<g transform="translate(153.00 224.84)"><path d="M1.4 0.6 H6.6 V6.4 L5.4 7.2 H1.4 Z" fill="#d6ecf8" stroke="#9cc4e4" stroke-width="0.5"/><path d="M2.6 2.4 Q4 1.2 5.4 2.4 L5.8 3.8 L4.6 3.4 Q4 2.8 3.4 3.4 Z" fill="#3aa04e"/><path d="M2.4 4 L3.6 4.4 Q4 5.2 5 4.6 L5.6 5.4 Q4 6.8 2.6 5.4 Z" fill="#2f8a5a"/><path d="M1.4 5.2 H3 V7.2 H1.4 Z" fill="#5a9ae0"/></g>
<g transform="translate(199.90 224.74)"><circle cx="3.9" cy="3.7" r="3.85" fill="url(#or)"/><circle cx="3.9" cy="3.7" r="1.85" fill="#fffaf2"/><path d="M2.4 4.4 Q3.9 6 5.4 4.4 Q3.9 5 2.4 4.4 Z" fill="#f8d0a8"/></g>
<g transform="translate(321.40 224.54)"><path d="M0.5 0.4 H4 L5.8 2.2 V7.8 H0.5 Z" fill="url(#pg)" stroke="#7c9cd0" stroke-width="0.6"/><path d="M4 0.4 V2.2 H5.8" fill="#eaf2fc" stroke="#7c9cd0" stroke-width="0.5"/></g>
<rect x="0.90" y="245.30" width="483.50" height="1.00" fill="#d8d5c7"/>
<rect x="26.20" y="234.02" width="1.00" height="11.28" fill="#d8d5c7"/>
<rect x="150.50" y="234.02" width="1.00" height="11.28" fill="#d8d5c7"/>
<rect x="197.90" y="234.02" width="1.00" height="11.28" fill="#d8d5c7"/>
<rect x="231.10" y="234.02" width="1.00" height="11.28" fill="#d8d5c7"/>
<rect x="283.90" y="234.02" width="1.00" height="11.28" fill="#d8d5c7"/>
<rect x="318.50" y="234.02" width="1.00" height="11.28" fill="#d8d5c7"/>
<rect x="351.10" y="234.02" width="1.00" height="11.28" fill="#d8d5c7"/>
<rect x="383.90" y="234.02" width="1.00" height="11.28" fill="#d8d5c7"/>
<rect x="435.90" y="234.02" width="1.00" height="11.28" fill="#d8d5c7"/>
<rect x="10.30" y="236.72" width="6.00" height="6.00" fill="url(#cbx)" rx="0.5" stroke="#6486b2" stroke-width="0.75"/>
<g transform="translate(153.00 236.62)"><path d="M1.4 0.6 H6.6 V6.4 L5.4 7.2 H1.4 Z" fill="#d6ecf8" stroke="#9cc4e4" stroke-width="0.5"/><path d="M2.6 2.4 Q4 1.2 5.4 2.4 L5.8 3.8 L4.6 3.4 Q4 2.8 3.4 3.4 Z" fill="#3aa04e"/><path d="M2.4 4 L3.6 4.4 Q4 5.2 5 4.6 L5.6 5.4 Q4 6.8 2.6 5.4 Z" fill="#2f8a5a"/><path d="M1.4 5.2 H3 V7.2 H1.4 Z" fill="#5a9ae0"/></g>
<g transform="translate(199.90 236.52)"><circle cx="3.9" cy="3.7" r="3.85" fill="url(#or)"/><circle cx="3.9" cy="3.7" r="1.85" fill="#fffaf2"/><path d="M2.4 4.4 Q3.9 6 5.4 4.4 Q3.9 5 2.4 4.4 Z" fill="#f8d0a8"/></g>
<g transform="translate(321.40 236.32)"><path d="M0.5 0.4 H4 L5.8 2.2 V7.8 H0.5 Z" fill="url(#pg)" stroke="#7c9cd0" stroke-width="0.6"/><path d="M4 0.4 V2.2 H5.8" fill="#eaf2fc" stroke="#7c9cd0" stroke-width="0.5"/></g>
<rect x="0.90" y="257.08" width="483.50" height="1.00" fill="#d8d5c7"/>
<rect x="26.20" y="245.80" width="1.00" height="11.28" fill="#d8d5c7"/>
<rect x="150.50" y="245.80" width="1.00" height="11.28" fill="#d8d5c7"/>
<rect x="197.90" y="245.80" width="1.00" height="11.28" fill="#d8d5c7"/>
<rect x="231.10" y="245.80" width="1.00" height="11.28" fill="#d8d5c7"/>
<rect x="283.90" y="245.80" width="1.00" height="11.28" fill="#d8d5c7"/>
<rect x="318.50" y="245.80" width="1.00" height="11.28" fill="#d8d5c7"/>
<rect x="351.10" y="245.80" width="1.00" height="11.28" fill="#d8d5c7"/>
<rect x="383.90" y="245.80" width="1.00" height="11.28" fill="#d8d5c7"/>
<rect x="435.90" y="245.80" width="1.00" height="11.28" fill="#d8d5c7"/>
<rect x="10.30" y="248.50" width="6.00" height="6.00" fill="url(#cbx)" rx="0.5" stroke="#6486b2" stroke-width="0.75"/>
<g transform="translate(153.00 248.40)"><path d="M0.6 7 L3.6 3.8" stroke="#2f4fc0" stroke-width="1.2" stroke-linecap="round"/><path d="M3 3.6 Q3.8 0.8 7 0.6 Q6.6 3.8 4 4.6 Z" fill="#5878e0" stroke="#2a3f9a" stroke-width="0.4"/><path d="M4.4 1.6 L6 3.2" stroke="#c8d4f8" stroke-width="0.5"/></g>
<g transform="translate(199.90 248.30)"><circle cx="3.9" cy="3.7" r="3.85" fill="url(#or)"/><circle cx="3.9" cy="3.7" r="1.85" fill="#fffaf2"/><path d="M2.4 4.4 Q3.9 6 5.4 4.4 Q3.9 5 2.4 4.4 Z" fill="#f8d0a8"/></g>
<g transform="translate(321.40 248.30)"><circle cx="3.9" cy="3.7" r="3.85" fill="url(#or)"/><path d="M2.9 2.2 V5.2 M4.9 2.2 V5.2" stroke="#fff" stroke-width="1"/></g>
<rect x="0.90" y="268.86" width="483.50" height="1.00" fill="#d8d5c7"/>
<rect x="26.20" y="257.58" width="1.00" height="11.28" fill="#d8d5c7"/>
<rect x="150.50" y="257.58" width="1.00" height="11.28" fill="#d8d5c7"/>
<rect x="197.90" y="257.58" width="1.00" height="11.28" fill="#d8d5c7"/>
<rect x="231.10" y="257.58" width="1.00" height="11.28" fill="#d8d5c7"/>
<rect x="283.90" y="257.58" width="1.00" height="11.28" fill="#d8d5c7"/>
<rect x="318.50" y="257.58" width="1.00" height="11.28" fill="#d8d5c7"/>
<rect x="351.10" y="257.58" width="1.00" height="11.28" fill="#d8d5c7"/>
<rect x="383.90" y="257.58" width="1.00" height="11.28" fill="#d8d5c7"/>
<rect x="435.90" y="257.58" width="1.00" height="11.28" fill="#d8d5c7"/>
<rect x="10.30" y="260.28" width="6.00" height="6.00" fill="url(#cbx)" rx="0.5" stroke="#6486b2" stroke-width="0.75"/>
<g transform="translate(153.00 260.18)"><path d="M0.6 7 L3.6 3.8" stroke="#2f4fc0" stroke-width="1.2" stroke-linecap="round"/><path d="M3 3.6 Q3.8 0.8 7 0.6 Q6.6 3.8 4 4.6 Z" fill="#5878e0" stroke="#2a3f9a" stroke-width="0.4"/><path d="M4.4 1.6 L6 3.2" stroke="#c8d4f8" stroke-width="0.5"/></g>
<g transform="translate(199.90 260.08)"><circle cx="3.9" cy="3.7" r="3.85" fill="url(#or)"/><circle cx="3.9" cy="3.7" r="1.85" fill="#fffaf2"/><path d="M2.4 4.4 Q3.9 6 5.4 4.4 Q3.9 5 2.4 4.4 Z" fill="#f8d0a8"/></g>
<g transform="translate(321.40 259.88)"><path d="M0.5 0.4 H4 L5.8 2.2 V7.8 H0.5 Z" fill="url(#pg)" stroke="#7c9cd0" stroke-width="0.6"/><path d="M4 0.4 V2.2 H5.8" fill="#eaf2fc" stroke="#7c9cd0" stroke-width="0.5"/></g>
<rect x="0.90" y="280.64" width="483.50" height="1.00" fill="#d8d5c7"/>
<rect x="26.20" y="269.36" width="1.00" height="11.28" fill="#d8d5c7"/>
<rect x="150.50" y="269.36" width="1.00" height="11.28" fill="#d8d5c7"/>
<rect x="197.90" y="269.36" width="1.00" height="11.28" fill="#d8d5c7"/>
<rect x="231.10" y="269.36" width="1.00" height="11.28" fill="#d8d5c7"/>
<rect x="283.90" y="269.36" width="1.00" height="11.28" fill="#d8d5c7"/>
<rect x="318.50" y="269.36" width="1.00" height="11.28" fill="#d8d5c7"/>
<rect x="351.10" y="269.36" width="1.00" height="11.28" fill="#d8d5c7"/>
<rect x="383.90" y="269.36" width="1.00" height="11.28" fill="#d8d5c7"/>
<rect x="435.90" y="269.36" width="1.00" height="11.28" fill="#d8d5c7"/>
<rect x="10.30" y="272.06" width="6.00" height="6.00" fill="url(#cbx)" rx="0.5" stroke="#6486b2" stroke-width="0.75"/>
<g transform="translate(153.00 271.96)"><path d="M0.6 7 L3.6 3.8" stroke="#2f4fc0" stroke-width="1.2" stroke-linecap="round"/><path d="M3 3.6 Q3.8 0.8 7 0.6 Q6.6 3.8 4 4.6 Z" fill="#5878e0" stroke="#2a3f9a" stroke-width="0.4"/><path d="M4.4 1.6 L6 3.2" stroke="#c8d4f8" stroke-width="0.5"/></g>
<g transform="translate(199.90 271.86)"><circle cx="3.9" cy="3.7" r="3.85" fill="url(#or)"/><circle cx="3.9" cy="3.7" r="1.85" fill="#fffaf2"/><path d="M2.4 4.4 Q3.9 6 5.4 4.4 Q3.9 5 2.4 4.4 Z" fill="#f8d0a8"/></g>
<g transform="translate(321.40 271.66)"><path d="M0.5 0.4 H4 L5.8 2.2 V7.8 H0.5 Z" fill="url(#pg)" stroke="#7c9cd0" stroke-width="0.6"/><path d="M4 0.4 V2.2 H5.8" fill="#eaf2fc" stroke="#7c9cd0" stroke-width="0.5"/></g>
<rect x="0.90" y="288.49" width="483.50" height="1.00" fill="#d8d5c7"/>
<rect x="0.90" y="300.27" width="483.50" height="1.00" fill="#d8d5c7"/>
<rect x="26.20" y="288.99" width="1.00" height="11.28" fill="#d8d5c7"/>
<rect x="150.50" y="288.99" width="1.00" height="11.28" fill="#d8d5c7"/>
<rect x="197.90" y="288.99" width="1.00" height="11.28" fill="#d8d5c7"/>
<rect x="231.10" y="288.99" width="1.00" height="11.28" fill="#d8d5c7"/>
<rect x="283.90" y="288.99" width="1.00" height="11.28" fill="#d8d5c7"/>
<rect x="318.50" y="288.99" width="1.00" height="11.28" fill="#d8d5c7"/>
<rect x="351.10" y="288.99" width="1.00" height="11.28" fill="#d8d5c7"/>
<rect x="383.90" y="288.99" width="1.00" height="11.28" fill="#d8d5c7"/>
<rect x="435.90" y="288.99" width="1.00" height="11.28" fill="#d8d5c7"/>
<rect x="10.30" y="291.69" width="6.00" height="6.00" fill="url(#cbx)" rx="0.5" stroke="#6486b2" stroke-width="0.75"/>
<g transform="translate(153.00 291.59)"><circle cx="3.8" cy="4.2" r="2.7" fill="#f6faff" stroke="#2c62cc" stroke-width="1.3"/><rect x="2.8" y="0" width="2" height="1.5" fill="#2c62cc"/><path d="M3.8 4.2 V2.8 M3.8 4.2 L4.8 4.8" stroke="#6a8ad0" stroke-width="0.5"/></g>
<g transform="translate(199.90 291.49)"><circle cx="3.9" cy="3.7" r="3.85" fill="url(#or)"/><circle cx="3.9" cy="3.7" r="1.85" fill="#fffaf2"/><path d="M2.4 4.4 Q3.9 6 5.4 4.4 Q3.9 5 2.4 4.4 Z" fill="#f8d0a8"/></g>
<g transform="translate(321.40 291.49)"><circle cx="3.9" cy="3.7" r="3.85" fill="url(#or)"/><path d="M2.9 1.8 L5.8 3.7 L2.9 5.6 Z" fill="#fff"/></g>
<rect x="352.80" y="291.09" width="15.15" height="8.18" fill="url(#pb)"/>
<rect x="0.90" y="312.05" width="483.50" height="1.00" fill="#d8d5c7"/>
<rect x="26.20" y="300.77" width="1.00" height="11.28" fill="#d8d5c7"/>
<rect x="150.50" y="300.77" width="1.00" height="11.28" fill="#d8d5c7"/>
<rect x="197.90" y="300.77" width="1.00" height="11.28" fill="#d8d5c7"/>
<rect x="231.10" y="300.77" width="1.00" height="11.28" fill="#d8d5c7"/>
<rect x="283.90" y="300.77" width="1.00" height="11.28" fill="#d8d5c7"/>
<rect x="318.50" y="300.77" width="1.00" height="11.28" fill="#d8d5c7"/>
<rect x="351.10" y="300.77" width="1.00" height="11.28" fill="#d8d5c7"/>
<rect x="383.90" y="300.77" width="1.00" height="11.28" fill="#d8d5c7"/>
<rect x="435.90" y="300.77" width="1.00" height="11.28" fill="#d8d5c7"/>
<rect x="10.30" y="303.47" width="6.00" height="6.00" fill="url(#cbx)" rx="0.5" stroke="#6486b2" stroke-width="0.75"/>
<g transform="translate(153.00 303.37)"><circle cx="3.8" cy="4.2" r="2.7" fill="#f6faff" stroke="#2c62cc" stroke-width="1.3"/><rect x="2.8" y="0" width="2" height="1.5" fill="#2c62cc"/><path d="M3.8 4.2 V2.8 M3.8 4.2 L4.8 4.8" stroke="#6a8ad0" stroke-width="0.5"/></g>
<g transform="translate(199.90 303.27)"><circle cx="3.9" cy="3.7" r="3.85" fill="url(#or)"/><circle cx="3.9" cy="3.7" r="1.85" fill="#fffaf2"/><path d="M2.4 4.4 Q3.9 6 5.4 4.4 Q3.9 5 2.4 4.4 Z" fill="#f8d0a8"/></g>
<g transform="translate(321.40 303.27)"><circle cx="3.8" cy="4.2" r="2.7" fill="#f6faff" stroke="#2c62cc" stroke-width="1.3"/><rect x="2.8" y="0" width="2" height="1.5" fill="#2c62cc"/><path d="M3.8 4.2 V2.8 M3.8 4.2 L4.8 4.8" stroke="#6a8ad0" stroke-width="0.5"/></g>
<rect x="352.80" y="302.87" width="3.03" height="8.18" fill="url(#pb)"/>
<rect x="0.90" y="323.83" width="483.50" height="1.00" fill="#d8d5c7"/>
<rect x="26.20" y="312.55" width="1.00" height="11.28" fill="#d8d5c7"/>
<rect x="150.50" y="312.55" width="1.00" height="11.28" fill="#d8d5c7"/>
<rect x="197.90" y="312.55" width="1.00" height="11.28" fill="#d8d5c7"/>
<rect x="231.10" y="312.55" width="1.00" height="11.28" fill="#d8d5c7"/>
<rect x="283.90" y="312.55" width="1.00" height="11.28" fill="#d8d5c7"/>
<rect x="318.50" y="312.55" width="1.00" height="11.28" fill="#d8d5c7"/>
<rect x="351.10" y="312.55" width="1.00" height="11.28" fill="#d8d5c7"/>
<rect x="383.90" y="312.55" width="1.00" height="11.28" fill="#d8d5c7"/>
<rect x="435.90" y="312.55" width="1.00" height="11.28" fill="#d8d5c7"/>
<rect x="10.30" y="315.25" width="6.00" height="6.00" fill="url(#cbx)" rx="0.5" stroke="#6486b2" stroke-width="0.75"/>
<g transform="translate(153.00 315.15)"><circle cx="3.8" cy="4.2" r="2.7" fill="#f6faff" stroke="#2c62cc" stroke-width="1.3"/><rect x="2.8" y="0" width="2" height="1.5" fill="#2c62cc"/><path d="M3.8 4.2 V2.8 M3.8 4.2 L4.8 4.8" stroke="#6a8ad0" stroke-width="0.5"/></g>
<g transform="translate(199.90 315.05)"><circle cx="3.9" cy="3.7" r="3.85" fill="url(#or)"/><circle cx="3.9" cy="3.7" r="1.85" fill="#fffaf2"/><path d="M2.4 4.4 Q3.9 6 5.4 4.4 Q3.9 5 2.4 4.4 Z" fill="#f8d0a8"/></g>
<g transform="translate(321.40 314.85)"><path d="M0.5 0.4 H4 L5.8 2.2 V7.8 H0.5 Z" fill="url(#pg)" stroke="#7c9cd0" stroke-width="0.6"/><path d="M4 0.4 V2.2 H5.8" fill="#eaf2fc" stroke="#7c9cd0" stroke-width="0.5"/></g>
<rect x="0.90" y="335.61" width="483.50" height="1.00" fill="#d8d5c7"/>
<rect x="26.20" y="324.33" width="1.00" height="11.28" fill="#d8d5c7"/>
<rect x="150.50" y="324.33" width="1.00" height="11.28" fill="#d8d5c7"/>
<rect x="197.90" y="324.33" width="1.00" height="11.28" fill="#d8d5c7"/>
<rect x="231.10" y="324.33" width="1.00" height="11.28" fill="#d8d5c7"/>
<rect x="283.90" y="324.33" width="1.00" height="11.28" fill="#d8d5c7"/>
<rect x="318.50" y="324.33" width="1.00" height="11.28" fill="#d8d5c7"/>
<rect x="351.10" y="324.33" width="1.00" height="11.28" fill="#d8d5c7"/>
<rect x="383.90" y="324.33" width="1.00" height="11.28" fill="#d8d5c7"/>
<rect x="435.90" y="324.33" width="1.00" height="11.28" fill="#d8d5c7"/>
<rect x="10.30" y="327.03" width="6.00" height="6.00" fill="url(#cbx)" rx="0.5" stroke="#6486b2" stroke-width="0.75"/>
<g transform="translate(153.00 326.93)"><rect x="1" y="0.8" width="5.6" height="6.4" rx="0.5" fill="#f4f0ee" stroke="#8c3636" stroke-width="1"/><rect x="2.6" y="0" width="2.4" height="1.4" fill="#a8a8b0"/><path d="M3.4 3 L4 2.6 V5.8 M3.2 5.8 H4.8" stroke="#5a5a6a" stroke-width="0.7" fill="none"/></g>
<g transform="translate(199.90 326.83)"><rect x="0.5" y="0.2" width="6.8" height="7" rx="1" fill="url(#rd)"/><path d="M2 3.6 L3.9 1.7 L5.8 3.6 M2 5.8 L3.9 3.9 L5.8 5.8" fill="none" stroke="#fff" stroke-width="0.95"/></g>
<g transform="translate(321.40 326.83)"><circle cx="3.9" cy="3.7" r="3.85" fill="url(#or)"/><path d="M2.9 1.8 L5.8 3.7 L2.9 5.6 Z" fill="#fff"/></g>
<rect x="352.80" y="326.43" width="21.21" height="8.18" fill="url(#pb)"/>
<rect x="0.90" y="347.39" width="483.50" height="1.00" fill="#d8d5c7"/>
<rect x="26.20" y="336.11" width="1.00" height="11.28" fill="#d8d5c7"/>
<rect x="150.50" y="336.11" width="1.00" height="11.28" fill="#d8d5c7"/>
<rect x="197.90" y="336.11" width="1.00" height="11.28" fill="#d8d5c7"/>
<rect x="231.10" y="336.11" width="1.00" height="11.28" fill="#d8d5c7"/>
<rect x="283.90" y="336.11" width="1.00" height="11.28" fill="#d8d5c7"/>
<rect x="318.50" y="336.11" width="1.00" height="11.28" fill="#d8d5c7"/>
<rect x="351.10" y="336.11" width="1.00" height="11.28" fill="#d8d5c7"/>
<rect x="383.90" y="336.11" width="1.00" height="11.28" fill="#d8d5c7"/>
<rect x="435.90" y="336.11" width="1.00" height="11.28" fill="#d8d5c7"/>
<rect x="10.30" y="338.81" width="6.00" height="6.00" fill="url(#cbx)" rx="0.5" stroke="#6486b2" stroke-width="0.75"/>
<g transform="translate(153.00 338.71)"><rect x="1" y="0.8" width="5.6" height="6.4" rx="0.5" fill="#f4f0ee" stroke="#8c3636" stroke-width="1"/><rect x="2.6" y="0" width="2.4" height="1.4" fill="#a8a8b0"/><path d="M3.4 3 L4 2.6 V5.8 M3.2 5.8 H4.8" stroke="#5a5a6a" stroke-width="0.7" fill="none"/></g>
<g transform="translate(199.90 338.61)"><circle cx="3.9" cy="3.7" r="3.85" fill="url(#or)"/><circle cx="3.9" cy="3.7" r="1.85" fill="#fffaf2"/><path d="M2.4 4.4 Q3.9 6 5.4 4.4 Q3.9 5 2.4 4.4 Z" fill="#f8d0a8"/></g>
<g transform="translate(321.40 338.61)"><circle cx="3.9" cy="3.7" r="3.85" fill="url(#or)"/><path d="M2.9 1.8 L5.8 3.7 L2.9 5.6 Z" fill="#fff"/></g>
<rect x="352.80" y="338.21" width="7.58" height="8.18" fill="url(#pb)"/>
<rect x="0.90" y="359.17" width="483.50" height="1.00" fill="#d8d5c7"/>
<rect x="26.20" y="347.89" width="1.00" height="11.28" fill="#d8d5c7"/>
<rect x="150.50" y="347.89" width="1.00" height="11.28" fill="#d8d5c7"/>
<rect x="197.90" y="347.89" width="1.00" height="11.28" fill="#d8d5c7"/>
<rect x="231.10" y="347.89" width="1.00" height="11.28" fill="#d8d5c7"/>
<rect x="283.90" y="347.89" width="1.00" height="11.28" fill="#d8d5c7"/>
<rect x="318.50" y="347.89" width="1.00" height="11.28" fill="#d8d5c7"/>
<rect x="351.10" y="347.89" width="1.00" height="11.28" fill="#d8d5c7"/>
<rect x="383.90" y="347.89" width="1.00" height="11.28" fill="#d8d5c7"/>
<rect x="435.90" y="347.89" width="1.00" height="11.28" fill="#d8d5c7"/>
<rect x="10.30" y="350.59" width="6.00" height="6.00" fill="url(#cbx)" rx="0.5" stroke="#6486b2" stroke-width="0.75"/>
<g transform="translate(153.00 350.49)"><rect x="1" y="0.8" width="5.6" height="6.4" rx="0.5" fill="#f4f0ee" stroke="#8c3636" stroke-width="1"/><rect x="2.6" y="0" width="2.4" height="1.4" fill="#a8a8b0"/><path d="M3.4 3 L4 2.6 V5.8 M3.2 5.8 H4.8" stroke="#5a5a6a" stroke-width="0.7" fill="none"/></g>
<g transform="translate(199.90 350.39)"><circle cx="3.9" cy="3.7" r="3.85" fill="url(#or)"/><circle cx="3.9" cy="3.7" r="1.85" fill="#fffaf2"/><path d="M2.4 4.4 Q3.9 6 5.4 4.4 Q3.9 5 2.4 4.4 Z" fill="#f8d0a8"/></g>
<g transform="translate(321.40 350.39)"><circle cx="3.9" cy="3.7" r="3.85" fill="url(#or)"/><path d="M2.9 1.8 L5.8 3.7 L2.9 5.6 Z" fill="#fff"/></g>
<rect x="352.80" y="349.99" width="18.18" height="8.18" fill="url(#pb)"/>
<rect x="0.00" y="12.50" width="0.90" height="452.00" fill="#c3d3ea"/>
<rect x="0.00" y="381.50" width="484.40" height="13.00" fill="#e3e0d1"/>
<rect x="0.00" y="381.30" width="484.40" height="0.70" fill="#cfccbb"/>
<rect x="27.00" y="383.60" width="124.00" height="8.80" fill="#f4f3ec" stroke="#d3d0c0" stroke-width="0.5"/>
<rect x="384.80" y="383.60" width="51.30" height="8.80" fill="#f4f3ec" stroke="#d3d0c0" stroke-width="0.5"/>
<rect x="436.80" y="383.60" width="47.00" height="8.80" fill="#f4f3ec" stroke="#d3d0c0" stroke-width="0.5"/>
<rect x="0.00" y="394.30" width="484.40" height="1.20" fill="#fbfaf6"/>
<rect x="0.00" y="395.50" width="484.40" height="9.50" fill="#f1efe5"/>
<rect x="0.90" y="405.60" width="483.00" height="35.40" fill="#ffffff" stroke="#b7c6e0" stroke-width="1"/>
<path d="M469.60 398.00 H473.40 M470.40 398.00 V400.80 M472.40 398.00 V400.80 M468.90 400.90 H474.10 M471.50 401.00 V403.40" fill="none" stroke="#2a55c4" stroke-width="0.8"/>
<rect x="471.70" y="398.20" width="0.90" height="2.60" fill="#2a55c4"/>
<rect x="476.30" y="397.60" width="5.80" height="5.80" fill="#dc4a2a" rx="0.9"/>
<path d="M477.70 399.00 L480.70 402.00 M480.70 399.00 L477.70 402.00" stroke="#fff" stroke-width="1"/>
<rect x="0.00" y="441.50" width="484.40" height="14.50" fill="#f0eee3"/>
<rect x="0.90" y="441.60" width="483.00" height="1.60" fill="#f9f9f6"/>
<rect x="0.90" y="443.20" width="483.00" height="0.70" fill="#d4d2c6"/>
<rect x="3.40" y="441.30" width="14.30" height="12.20" fill="#fdfdfb" stroke="#b4b1a0" stroke-width="0.5"/>
<rect x="3.60" y="453.00" width="13.90" height="1.10" fill="#eca030"/>
<rect x="18.20" y="442.60" width="32.20" height="11.40" fill="#f8f7f2" rx="1" stroke="#b9b6a6" stroke-width="0.5"/>
<rect x="0.00" y="456.00" width="600.00" height="9.00" fill="#ece9d8"/>
<rect x="0.00" y="454.60" width="600.00" height="0.80" fill="#dad7c8"/>
<rect x="0.00" y="455.30" width="600.00" height="1.20" fill="#b4b1a2"/>
<rect x="0.00" y="456.50" width="600.00" height="0.60" fill="#d8d5c6"/>
<rect x="0.00" y="458.00" width="8.00" height="4.00" fill="#f1efe5"/>
<rect x="0.00" y="464.90" width="43.00" height="1.10" fill="#7fa488"/>
<rect x="43.00" y="464.90" width="557.00" height="1.10" fill="#6f8cd6"/>
<rect x="484.40" y="36.80" width="115.60" height="417.00" fill="#ece9d8"/>
<rect x="484.40" y="36.80" width="1.00" height="345.00" fill="#c9c6b6"/>
<rect x="485.40" y="36.80" width="1.00" height="417.00" fill="#f8f7f2"/>
<rect x="484.50" y="60.80" width="2.30" height="392.60" fill="#b5c5da"/>
<rect x="483.80" y="36.80" width="0.80" height="24.00" fill="#c8d6ea"/>
<rect x="486.40" y="37.50" width="112.20" height="9.10" fill="url(#pt)"/>
<rect x="576.10" y="39.30" width="5.80" height="5.80" fill="#2f6bdc" rx="1"/>
<rect x="577.70" y="40.90" width="2.60" height="2.60" fill="#3f7be4" stroke="#fff" stroke-width="0.8"/>
<path d="M584.50 39.70 H588.30 M585.30 39.70 V42.50 M587.30 39.70 V42.50 M583.80 42.60 H589.00 M586.40 42.70 V45.10" fill="none" stroke="#2a55c4" stroke-width="0.8"/>
<rect x="586.60" y="39.90" width="0.90" height="2.60" fill="#2a55c4"/>
<rect x="591.20" y="39.30" width="5.80" height="5.80" fill="#dc4a2a" rx="0.9"/>
<path d="M592.60 40.70 L595.60 43.70 M595.60 40.70 L592.60 43.70" stroke="#fff" stroke-width="1"/>
<rect x="486.40" y="46.60" width="112.20" height="14.40" fill="#ece9d8"/>
<path d="M486.4 46.8 H560 L534 60.6 H486.4 Z" fill="url(#tl)"/>
<rect x="488.40" y="50.60" width="0.80" height="0.80" fill="#a8a594"/>
<rect x="488.40" y="52.20" width="0.80" height="0.80" fill="#a8a594"/>
<rect x="488.40" y="53.80" width="0.80" height="0.80" fill="#a8a594"/>
<rect x="488.40" y="55.40" width="0.80" height="0.80" fill="#a8a594"/>
<rect x="488.40" y="57.00" width="0.80" height="0.80" fill="#a8a594"/>
<rect x="488.40" y="58.60" width="0.80" height="0.80" fill="#a8a594"/>
<g transform="translate(492.40 51.60)"><path d="M0.3 1.6 H6.3 V6 H0.3 Z" fill="#f6f9fe" stroke="#7fa0d8" stroke-width="0.5"/><path d="M0.3 1.6 H6.3 V2.8 H0.3 Z" fill="#4a7ad8"/><path d="M4.2 0.8 H7.2 M5.7 -0.4 V2.2" stroke="#2f9a48" stroke-width="0.9"/></g>
<g transform="translate(503.60 51.60)"><path d="M1.4 2 H5.4 V6.6 H1.4 Z" fill="#6aa8e8" stroke="#3f78c8" stroke-width="0.5"/><path d="M0.6 1 H3 M4 1 H6.4 M3.4 2 V0.8" stroke="#3f78c8" stroke-width="0.6"/><path d="M4.8 0.6 H7.4 M6.1 -0.6 V1.8" stroke="#2f9a48" stroke-width="0.9"/></g>
<g transform="translate(515.40 51.60)"><path d="M0.3 1.6 H6.3 V6 H0.3 Z" fill="#f6f9fe" stroke="#7fa0d8" stroke-width="0.5"/><path d="M0.3 1.6 H6.3 V2.8 H0.3 Z" fill="#4a7ad8"/><path d="M2.4 4.6 L6.4 0.4 L7.2 1.2 L3.2 5.4 Z" fill="#f0c040" stroke="#b88a20" stroke-width="0.3"/></g>
<g transform="translate(527.00 51.60)"><path d="M0.3 1.6 H6.3 V6 H0.3 Z" fill="#f6f9fe" stroke="#7fa0d8" stroke-width="0.5"/><path d="M0.3 1.6 H6.3 V2.8 H0.3 Z" fill="#4a7ad8"/><path d="M4.2 3.6 L7 6.6 M7 3.6 L4.2 6.6" stroke="#e04a3a" stroke-width="0.9"/></g>
<path d="M537.00 56.40 H539.80 L538.40 57.90 Z" fill="#111"/>
<rect x="486.60" y="61.40" width="112.00" height="181.20" fill="#ffffff" stroke="#a9b7cc" stroke-width="0.9"/>
<rect x="487.00" y="61.90" width="111.20" height="7.70" fill="#ebe8d7"/>
<rect x="487.00" y="69.40" width="111.20" height="0.60" fill="#c9c6b4"/>
<rect x="574.20" y="63.00" width="0.60" height="5.60" fill="#cfccba"/>
<rect x="587.60" y="63.00" width="0.60" height="5.60" fill="#cfccba"/>
<rect x="489.40" y="72.70" width="3.80" height="3.80" fill="#f6f8fb" stroke="#a4b0c6" stroke-width="0.6"/>
<rect x="490.30" y="74.30" width="2.00" height="0.60" fill="#333"/>
<g transform="translate(495.40 71.10)"><path d="M0.8 1.6 H3 L3.6 2.3 H6.2 V6 H0.8 Z" fill="#f2c230" stroke="#b88a18" stroke-width="0.5"/><path d="M1 6 L2.2 3.4 H7.4 L6.2 6 Z" fill="#fbe060" stroke="#c09420" stroke-width="0.45"/></g>
<g transform="translate(505.80 70.80)" transform-origin="0 0"><rect x="1" y="0" width="5.6" height="5.4" rx="1" fill="#4a8ae0" stroke="#24407a" stroke-width="0.6"/><rect x="2" y="1" width="3.6" height="3" fill="#a8dcf8"/><path d="M2.4 5.6 H5.2 L5.8 7.4 H1.8 Z" fill="#5a6a8a"/></g>
<rect x="499.60" y="78.23" width="0.60" height="8.45" fill="#dedbd2"/>
<rect x="499.60" y="82.75" width="5.20" height="0.60" fill="#dedbd2"/>
<g transform="translate(505.80 79.25)"><rect x="1" y="0.8" width="5.6" height="6.4" rx="0.5" fill="#f4f0ee" stroke="#8c3636" stroke-width="1"/><rect x="2.6" y="0" width="2.4" height="1.4" fill="#a8a8b0"/><path d="M3.4 3 L4 2.6 V5.8 M3.2 5.8 H4.8" stroke="#5a5a6a" stroke-width="0.7" fill="none"/></g>
<rect x="499.60" y="86.68" width="0.60" height="8.45" fill="#dedbd2"/>
<rect x="499.60" y="91.20" width="5.20" height="0.60" fill="#dedbd2"/>
<g transform="translate(505.80 87.70)"><circle cx="3.8" cy="4.2" r="2.7" fill="#f6faff" stroke="#2c62cc" stroke-width="1.3"/><rect x="2.8" y="0" width="2" height="1.5" fill="#2c62cc"/><path d="M3.8 4.2 V2.8 M3.8 4.2 L4.8 4.8" stroke="#6a8ad0" stroke-width="0.5"/></g>
<rect x="499.60" y="95.12" width="0.60" height="4.82" fill="#dedbd2"/>
<rect x="499.60" y="99.65" width="5.20" height="0.60" fill="#dedbd2"/>
<g transform="translate(505.80 96.15)"><path d="M0.6 7 L3.6 3.8" stroke="#2f4fc0" stroke-width="1.2" stroke-linecap="round"/><path d="M3 3.6 Q3.8 0.8 7 0.6 Q6.6 3.8 4 4.6 Z" fill="#5878e0" stroke="#2a3f9a" stroke-width="0.4"/><path d="M4.4 1.6 L6 3.2" stroke="#c8d4f8" stroke-width="0.5"/></g>
<rect x="489.40" y="106.50" width="3.80" height="3.80" fill="#f6f8fb" stroke="#a4b0c6" stroke-width="0.6"/>
<rect x="490.30" y="108.10" width="2.00" height="0.60" fill="#333"/>
<g transform="translate(495.40 104.90)"><path d="M0.8 1.6 H3 L3.6 2.3 H6.2 V6 H0.8 Z" fill="#f2c230" stroke="#b88a18" stroke-width="0.5"/><path d="M1 6 L2.2 3.4 H7.4 L6.2 6 Z" fill="#fbe060" stroke="#c09420" stroke-width="0.45"/></g>
<g transform="translate(505.80 104.60)" transform-origin="0 0"><path d="M4.2 3.6 L1 6.8 M2 5.8 L3.2 7 M3 4.8 L4 5.8" stroke="#e0a020" stroke-width="1.4" fill="none"/><circle cx="5.3" cy="2.4" r="2.1" fill="#f8cc48" stroke="#d09018" stroke-width="0.6"/><circle cx="5.8" cy="1.9" r="0.7" fill="#fff8d8"/></g>
<rect x="499.60" y="112.03" width="0.60" height="8.45" fill="#dedbd2"/>
<rect x="499.60" y="116.55" width="5.20" height="0.60" fill="#dedbd2"/>
<g transform="translate(505.80 113.05)"><path d="M1.4 0.6 H6.6 V6.4 L5.4 7.2 H1.4 Z" fill="#d6ecf8" stroke="#9cc4e4" stroke-width="0.5"/><path d="M2.6 2.4 Q4 1.2 5.4 2.4 L5.8 3.8 L4.6 3.4 Q4 2.8 3.4 3.4 Z" fill="#3aa04e"/><path d="M2.4 4 L3.6 4.4 Q4 5.2 5 4.6 L5.6 5.4 Q4 6.8 2.6 5.4 Z" fill="#2f8a5a"/><path d="M1.4 5.2 H3 V7.2 H1.4 Z" fill="#5a9ae0"/></g>
<rect x="499.60" y="120.47" width="0.60" height="8.45" fill="#dedbd2"/>
<rect x="499.60" y="125.00" width="5.20" height="0.60" fill="#dedbd2"/>
<g transform="translate(505.80 121.50)"><circle cx="2" cy="1.9" r="1.6" fill="#f09a1c"/><path d="M0 7 Q0 3.6 2 3.6 Q4 3.6 4 7 Z" fill="#3a6ad8"/><circle cx="5.4" cy="1.9" r="1.6" fill="#7a3a18"/><circle cx="5.4" cy="2.3" r="1" fill="#f0a860"/><path d="M3.5 7 Q3.5 3.6 5.4 3.6 Q7.4 3.6 7.4 7 Z" fill="#2a9440"/></g>
<rect x="499.60" y="128.93" width="0.60" height="3.00" fill="#dedbd2"/>
<rect x="497.70" y="131.85" width="3.80" height="3.80" fill="#f6f8fb" stroke="#a4b0c6" stroke-width="0.6"/>
<rect x="498.60" y="133.45" width="2.00" height="0.60" fill="#333"/>
<rect x="499.30" y="132.75" width="0.60" height="2.00" fill="#333"/>
<g transform="translate(504.40 130.15)"><path d="M0.8 1.4 H3 L3.6 2.1 H6.8 V6.4 H0.8 Z" fill="#f8d850" stroke="#c8a030" stroke-width="0.5"/><path d="M1.4 3.2 H6.2 V5.8 H1.4 Z" fill="#fdf0a8"/></g>
<g transform="translate(514.20 129.95)"><circle cx="2" cy="1.9" r="1.6" fill="#f09a1c"/><path d="M0 7 Q0 3.6 2 3.6 Q4 3.6 4 7 Z" fill="#3a6ad8"/><circle cx="5.4" cy="1.9" r="1.6" fill="#7a3a18"/><circle cx="5.4" cy="2.3" r="1" fill="#f0a860"/><path d="M3.5 7 Q3.5 3.6 5.4 3.6 Q7.4 3.6 7.4 7 Z" fill="#2a9440"/></g>
<rect x="489.40" y="140.30" width="3.80" height="3.80" fill="#f6f8fb" stroke="#a4b0c6" stroke-width="0.6"/>
<rect x="490.30" y="141.90" width="2.00" height="0.60" fill="#333"/>
<g transform="translate(495.40 138.70)"><path d="M0.8 1.6 H3 L3.6 2.3 H6.2 V6 H0.8 Z" fill="#f2c230" stroke="#b88a18" stroke-width="0.5"/><path d="M1 6 L2.2 3.4 H7.4 L6.2 6 Z" fill="#fbe060" stroke="#c09420" stroke-width="0.45"/></g>
<g transform="translate(505.80 138.40)" transform-origin="0 0"><ellipse cx="3.8" cy="3.8" rx="3.7" ry="2.7" fill="#e68a2c"/><ellipse cx="3" cy="3.2" rx="2" ry="1.2" fill="#f8d898"/><circle cx="5.2" cy="4.4" r="1" fill="#3a62c8"/><circle cx="2.4" cy="4.8" r="0.7" fill="#c83a2a"/></g>
<rect x="499.60" y="145.82" width="0.60" height="8.45" fill="#dedbd2"/>
<rect x="499.60" y="150.35" width="5.20" height="0.60" fill="#dedbd2"/>
<g transform="translate(505.80 146.85)"><path d="M0.5 1.8 Q2 0.8 3.9 2 Q5.8 0.8 7.4 1.8 L6.9 5.8 Q5.4 5 3.9 6.2 Q2.4 5 0.9 5.8 Z" fill="#ffffff" stroke="#e6a878" stroke-width="0.6"/><path d="M3.9 2.2 V6" stroke="#7a98d8" stroke-width="0.6"/><path d="M1.6 3 Q2.4 2.6 3.2 3.2 M1.7 4.2 Q2.5 3.8 3.2 4.4" stroke="#f0c8a8" stroke-width="0.4" fill="none"/><path d="M5 2.6 Q6.2 3.6 5.4 5" stroke="#6a8ad8" stroke-width="0.7" fill="none"/></g>
<rect x="499.60" y="154.28" width="0.60" height="8.45" fill="#dedbd2"/>
<rect x="499.60" y="158.80" width="5.20" height="0.60" fill="#dedbd2"/>
<g transform="translate(505.80 155.30)"><circle cx="3.8" cy="3.6" r="3.7" fill="url(#ye)"/><circle cx="2.8" cy="2.6" r="0.5" fill="#5a4a10"/><circle cx="5" cy="2.6" r="0.5" fill="#5a4a10"/><path d="M4.6 4.8 Q5.6 5.4 6 4.4" fill="none" stroke="#c8503a" stroke-width="0.6"/></g>
<rect x="574.00" y="163.52" width="24.20" height="8.05" fill="#ece9d8"/>
<rect x="504.20" y="163.22" width="94.00" height="8.65" fill="none" stroke="#3a3a3a" stroke-width="0.8"/>
<rect x="499.60" y="162.72" width="0.60" height="8.45" fill="#dedbd2"/>
<rect x="499.60" y="167.25" width="5.20" height="0.60" fill="#dedbd2"/>
<g transform="translate(505.80 163.75)"><rect x="0.4" y="0.5" width="6.9" height="5.9" fill="#d9efd9" stroke="#2a8434" stroke-width="0.8"/><path d="M0.8 0.9 H3 V2.6 H0.8 Z" fill="#2f8a3c"/><path d="M1 3.4 H3.4 V5.8 H1 Z" fill="#ffffff"/><path d="M4.6 0.9 H6.9 V3 H4.6 Z" fill="#8fd09a"/><path d="M2.6 1.8 L4.6 4" stroke="#e89a30" stroke-width="1.3"/><path d="M4.4 3.8 L7 7" stroke="#2c55c0" stroke-width="1.3"/></g>
<rect x="499.60" y="171.18" width="0.60" height="8.45" fill="#dedbd2"/>
<rect x="499.60" y="175.70" width="5.20" height="0.60" fill="#dedbd2"/>
<g transform="translate(505.80 172.20)"><rect x="0.8" y="0" width="0.9" height="7.4" fill="#30408a"/><path d="M1.7 0.3 Q3 1.2 4.2 0.4 Q5.6 -0.2 7 0.6 V4.6 Q5.6 3.8 4.2 4.4 Q3 5.2 1.7 4.4 Z" fill="#5a74d4"/><path d="M3.4 0.8 V4.6 M5.2 0.4 V4.2" stroke="#c8d4f8" stroke-width="0.7"/></g>
<rect x="499.60" y="179.62" width="0.60" height="4.82" fill="#dedbd2"/>
<rect x="499.60" y="184.15" width="5.20" height="0.60" fill="#dedbd2"/>
<g transform="translate(505.80 180.65)"><circle cx="2" cy="1.9" r="1.6" fill="#f09a1c"/><path d="M0 7 Q0 3.6 2 3.6 Q4 3.6 4 7 Z" fill="#3a6ad8"/><circle cx="5.4" cy="1.9" r="1.6" fill="#7a3a18"/><circle cx="5.4" cy="2.3" r="1" fill="#f0a860"/><path d="M3.5 7 Q3.5 3.6 5.4 3.6 Q7.4 3.6 7.4 7 Z" fill="#2a9440"/></g>
<rect x="486.80" y="245.40" width="111.40" height="8.80" fill="url(#pt)"/>
<rect x="576.10" y="246.90" width="5.80" height="5.80" fill="#2f6bdc" rx="1"/>
<rect x="577.70" y="248.50" width="2.60" height="2.60" fill="#3f7be4" stroke="#fff" stroke-width="0.8"/>
<path d="M584.50 247.30 H588.30 M585.30 247.30 V250.10 M587.30 247.30 V250.10 M583.80 250.20 H589.00 M586.40 250.30 V252.70" fill="none" stroke="#2a55c4" stroke-width="0.8"/>
<rect x="586.60" y="247.50" width="0.90" height="2.60" fill="#2a55c4"/>
<rect x="591.20" y="246.90" width="5.80" height="5.80" fill="#dc4a2a" rx="0.9"/>
<path d="M592.60 248.30 L595.60 251.30 M595.60 248.30 L592.60 251.30" stroke="#fff" stroke-width="1"/>
<rect x="486.80" y="254.20" width="111.40" height="14.80" fill="#ece9d8"/>
<path d="M486.8 254.4 H580 L556 268.6 H486.8 Z" fill="url(#tl)"/>
<rect x="488.40" y="257.00" width="0.80" height="0.80" fill="#a8a594"/>
<rect x="488.40" y="258.60" width="0.80" height="0.80" fill="#a8a594"/>
<rect x="488.40" y="260.20" width="0.80" height="0.80" fill="#a8a594"/>
<rect x="488.40" y="261.80" width="0.80" height="0.80" fill="#a8a594"/>
<rect x="488.40" y="263.40" width="0.80" height="0.80" fill="#a8a594"/>
<rect x="488.40" y="265.00" width="0.80" height="0.80" fill="#a8a594"/>
<rect x="491.00" y="257.60" width="43.00" height="9.00" fill="#f4f3ec" stroke="#a9bddc" stroke-width="0.7"/>
<path d="M528.6 261 L530.4 263 L532.2 261" fill="none" stroke="#c0bdb0" stroke-width="0.8"/>
<g transform="translate(536.60 257.80)"><path d="M0.4 2.4 H3.2 V7.4 H0.4 Z" fill="#f4f6fa" stroke="#a8b8d8" stroke-width="0.5"/><path d="M1.6 6.2 Q3 1.8 6.6 0.8 Q6.4 4.6 3 7 Z" fill="#3f9a4a"/><path d="M0.6 6 L2.4 7.6 L0.4 7.8 Z" fill="#4a7ad8"/></g>
<path d="M545.00 260.20 H547.80 L546.40 261.70 Z" fill="#111"/>
<ellipse cx="555.4" cy="262" rx="3.4" ry="2.3" transform="rotate(-28 555.4 262)" fill="#f6f6f2" stroke="#8c8c8c" stroke-width="0.6"/><path d="M552.6 264.6 H557.6" stroke="#8c8c8c" stroke-width="0.5"/>
<path d="M564.2 259 L569 264.4 M569 259 L564.2 264.4" stroke="#bcb9ae" stroke-width="1.4"/>
<path d="M573.20 264.40 H576.00 L574.60 265.90 Z" fill="#111"/>
<rect x="486.60" y="269.00" width="112.00" height="89.20" fill="#ece9d8" stroke="#a9b7cc" stroke-width="0.9"/>
<rect x="487.00" y="278.82" width="111.20" height="0.80" fill="#d6d3c3"/>
<rect x="533.00" y="269.50" width="0.80" height="9.82" fill="#d6d3c3"/>
<rect x="590.00" y="270.70" width="6.60" height="7.00" fill="#c1d3f7" rx="0.8"/>
<path d="M591.6 273.30 L593.3 275.20 L595 273.30" fill="none" stroke="#2c4f9a" stroke-width="1"/>
<rect x="487.00" y="288.64" width="111.20" height="0.80" fill="#d6d3c3"/>
<rect x="533.00" y="279.32" width="0.80" height="9.82" fill="#d6d3c3"/>
<rect x="590.00" y="280.52" width="6.60" height="7.00" fill="#c1d3f7" rx="0.8"/>
<path d="M591.6 283.12 L593.3 285.02 L595 283.12" fill="none" stroke="#2c4f9a" stroke-width="1"/>
<rect x="487.00" y="298.46" width="111.20" height="0.80" fill="#d6d3c3"/>
<rect x="533.00" y="289.14" width="0.80" height="9.82" fill="#d6d3c3"/>
<rect x="590.00" y="290.34" width="6.60" height="7.00" fill="#c1d3f7" rx="0.8"/>
<path d="M591.6 292.94 L593.3 294.84 L595 292.94" fill="none" stroke="#2c4f9a" stroke-width="1"/>
<rect x="487.00" y="308.28" width="111.20" height="0.80" fill="#d6d3c3"/>
<rect x="533.00" y="298.96" width="0.80" height="9.82" fill="#d6d3c3"/>
<rect x="590.00" y="300.16" width="6.60" height="7.00" fill="#c1d3f7" rx="0.8"/>
<path d="M591.6 302.76 L593.3 304.66 L595 302.76" fill="none" stroke="#2c4f9a" stroke-width="1"/>
<rect x="487.00" y="318.10" width="111.20" height="0.80" fill="#d6d3c3"/>
<rect x="533.00" y="308.78" width="0.80" height="9.82" fill="#d6d3c3"/>
<rect x="487.00" y="327.92" width="111.20" height="0.80" fill="#d6d3c3"/>
<rect x="533.00" y="318.60" width="0.80" height="9.82" fill="#d6d3c3"/>
<rect x="590.00" y="319.80" width="6.60" height="7.00" fill="#c1d3f7" rx="0.8"/>
<path d="M591.6 322.40 L593.3 324.30 L595 322.40" fill="none" stroke="#2c4f9a" stroke-width="1"/>
<rect x="487.00" y="337.74" width="111.20" height="0.80" fill="#d6d3c3"/>
<rect x="533.00" y="328.42" width="0.80" height="9.82" fill="#d6d3c3"/>
<rect x="590.00" y="329.62" width="6.60" height="7.00" fill="#c1d3f7" rx="0.8"/>
<path d="M591.6 332.22 L593.3 334.12 L595 332.22" fill="none" stroke="#2c4f9a" stroke-width="1"/>
<rect x="487.00" y="347.56" width="111.20" height="0.80" fill="#d6d3c3"/>
<rect x="533.00" y="338.24" width="0.80" height="9.82" fill="#d6d3c3"/>
<rect x="590.00" y="339.44" width="6.60" height="7.00" fill="#c1d3f7" rx="0.8"/>
<path d="M591.6 342.04 L593.3 343.94 L595 342.04" fill="none" stroke="#2c4f9a" stroke-width="1"/>
<rect x="487.00" y="357.38" width="111.20" height="0.80" fill="#d6d3c3"/>
<rect x="533.00" y="348.06" width="0.80" height="9.82" fill="#d6d3c3"/>
<rect x="590.00" y="349.26" width="6.60" height="7.00" fill="#c1d3f7" rx="0.8"/>
<path d="M591.6 351.86 L593.3 353.76 L595 351.86" fill="none" stroke="#2c4f9a" stroke-width="1"/>
<rect x="486.40" y="358.00" width="0.90" height="95.50" fill="#b9c4d6"/>
<rect x="597.50" y="358.00" width="0.80" height="96.00" fill="#f8f8f4"/>
<rect x="598.30" y="245.00" width="0.90" height="209.50" fill="#b4c0d4"/>
<rect x="486.80" y="453.30" width="111.60" height="0.90" fill="#f8f8f4"/>
<rect x="599.00" y="36.80" width="1.00" height="417.00" fill="#ece9d8"/>
</svg>
<div id="tx">
<div class="t" style="left:10.20px;top:2.97px;font-size:7px;color:#ffffff;font-weight:bold;transform:scaleX(0.878);">Vip organizer [C:\Program Files\VIP Quality Software\VIP Organizer\Data\demo.vpdb]</div>
<div class="t" style="left:6.90px;top:15.89px;font-size:5.8px;color:#111;">File</div>
<div class="t" style="left:18.90px;top:15.89px;font-size:5.8px;color:#111;">View</div>
<div class="t" style="left:34.20px;top:15.89px;font-size:5.8px;color:#111;">Tasks</div>
<div class="t" style="left:51.20px;top:15.89px;font-size:5.8px;color:#111;">Categories</div>
<div class="t" style="left:80.30px;top:15.89px;font-size:5.8px;color:#111;">Tools</div>
<div class="t" style="left:96.80px;top:15.89px;font-size:5.8px;color:#111;">Help</div>
<div class="t" style="left:208.2px;top:27.36px;width:35px;overflow:hidden;color:#111;">Default Task View</div>
<div class="t" style="left:4.00px;top:43.86px;color:#e2dfd4;">Drag a column header here to group by that column</div>
<div class="t c" style="left:13.50px;top:55.86px;color:#111;">Done</div>
<div class="t c" style="left:88.80px;top:55.86px;color:#111;">Name</div>
<div class="t c" style="left:170.50px;top:55.86px;color:#111;">Category</div>
<div class="t c" style="left:210.80px;top:55.86px;color:#111;">Priority</div>
<div class="t c" style="left:255.00px;top:55.86px;color:#111;">Due Date&amp;Time</div>
<div class="t c" style="left:302.00px;top:55.86px;color:#111;">Time Left</div>
<div class="t c" style="left:331.00px;top:55.86px;color:#111;">Status</div>
<div class="t c" style="left:368.00px;top:55.86px;color:#111;">Complete</div>
<div class="t c" style="left:410.00px;top:55.86px;color:#111;">Estimated Time</div>
<div class="t c" style="left:450.80px;top:55.86px;color:#111;">Actual Time</div>
<div class="t" style="left:27.20px;top:65.51px;">Buy Magenta tube</div>
<div class="t" style="left:162.20px;top:65.51px;">Drawing</div>
<div class="t" style="left:209.20px;top:65.51px;">Urgent</div>
<div class="t" style="left:330.3px;top:65.51px;width:22.5px;overflow:hidden;">Created</div>
<div class="t c" style="left:367.60px;top:65.51px;">0 %</div>
<div class="t c" style="left:410.40px;top:65.51px;">0h 0m</div>
<div class="t c" style="left:460.40px;top:65.51px;">0h 0m</div>
<div class="t" style="left:27.20px;top:77.29px;">Find frame 20x30 cm</div>
<div class="t" style="left:162.20px;top:77.29px;">Drawing</div>
<div class="t" style="left:209.20px;top:77.29px;">Highest</div>
<div class="t" style="left:330.3px;top:77.29px;width:22.5px;overflow:hidden;">Created</div>
<div class="t c" style="left:367.60px;top:77.29px;">0 %</div>
<div class="t c" style="left:410.40px;top:77.29px;">0h 0m</div>
<div class="t c" style="left:460.40px;top:77.29px;">0h 0m</div>
<div class="t" style="left:27.20px;top:89.07px;">Finish 'Bamboo'</div>
<div class="t" style="left:162.20px;top:89.07px;">Drawing</div>
<div class="t" style="left:209.20px;top:89.07px;">Normal</div>
<div class="t c" style="left:258.20px;top:89.07px;">31/12/2006 23:59</div>
<div class="t c" style="left:301.80px;top:88.42px;font-size:5.3px;color:#ee3a3a;">-183d 11h</div>
<div class="t" style="left:330.3px;top:89.07px;width:22.5px;overflow:hidden;">Open</div>
<div class="t c" style="left:367.60px;top:89.07px;">30 %</div>
<div class="t c" style="left:410.40px;top:89.07px;">0h 0m</div>
<div class="t c" style="left:460.40px;top:89.07px;">0h 0m</div>
<div class="t" style="left:27.20px;top:100.85px;">Visit mather-in-law</div>
<div class="t" style="left:162.20px;top:100.85px;">Having Fun</div>
<div class="t" style="left:209.20px;top:100.85px;">Normal</div>
<div class="t c" style="left:258.20px;top:100.85px;">30/09/2006 16:00</div>
<div class="t c" style="left:301.80px;top:100.20px;font-size:5.3px;color:#ee3a3a;">-275d 19h</div>
<div class="t" style="left:330.3px;top:100.85px;width:22.5px;overflow:hidden;">Created</div>
<div class="t c" style="left:367.60px;top:100.85px;">0 %</div>
<div class="t c" style="left:410.40px;top:100.85px;">0h 0m</div>
<div class="t c" style="left:460.40px;top:100.85px;">0h 0m</div>
<div class="t" style="left:27.20px;top:112.63px;">Go to the movies</div>
<div class="t" style="left:162.20px;top:112.63px;">Having Fun</div>
<div class="t" style="left:209.20px;top:112.63px;">Lowest</div>
<div class="t c" style="left:258.20px;top:112.63px;">14/05/2006 16:14</div>
<div class="t c" style="left:301.80px;top:111.98px;font-size:5.3px;color:#ee3a3a;">-414d 19h</div>
<div class="t" style="left:330.3px;top:112.63px;width:22.5px;overflow:hidden;">Created</div>
<div class="t c" style="left:367.60px;top:112.63px;">0 %</div>
<div class="t c" style="left:410.40px;top:112.63px;">0h 0m</div>
<div class="t c" style="left:460.40px;top:112.63px;">0h 0m</div>
<div class="t" style="left:27.20px;top:124.41px;">Meeting friends, having a bud</div>
<div class="t" style="left:162.20px;top:124.41px;">Having Fun</div>
<div class="t" style="left:209.20px;top:124.41px;">Normal</div>
<div class="t c" style="left:258.20px;top:124.41px;">12/05/2006 20:00</div>
<div class="t c" style="left:301.80px;top:123.76px;font-size:5.3px;color:#ee3a3a;">-416d 15h</div>
<div class="t" style="left:330.3px;top:124.41px;width:22.5px;overflow:hidden;">Created</div>
<div class="t c" style="left:367.60px;top:124.41px;">0 %</div>
<div class="t c" style="left:410.40px;top:124.41px;">0h 0m</div>
<div class="t c" style="left:460.40px;top:124.41px;">0h 0m</div>
<div class="t" style="left:27.20px;top:136.19px;">How to set goals</div>
<div class="t" style="left:162.20px;top:136.19px;">Reading</div>
<div class="t" style="left:209.20px;top:136.19px;">Highest</div>
<div class="t c" style="left:258.20px;top:136.19px;">31/10/2006 16:00</div>
<div class="t c" style="left:301.80px;top:135.54px;font-size:5.3px;color:#ee3a3a;">-244d 19h</div>
<div class="t" style="left:330.3px;top:136.19px;width:22.5px;overflow:hidden;">Created</div>
<div class="t c" style="left:367.60px;top:136.19px;">0 %</div>
<div class="t c" style="left:410.40px;top:136.19px;">0h 0m</div>
<div class="t c" style="left:460.40px;top:136.19px;">0h 0m</div>
<div class="t" style="left:27.20px;top:147.97px;">Time management tips</div>
<div class="t" style="left:162.20px;top:147.97px;">Reading</div>
<div class="t" style="left:209.20px;top:147.97px;">Normal</div>
<div class="t c" style="left:258.20px;top:147.97px;">09/08/2006 10:00</div>
<div class="t c" style="left:301.80px;top:147.32px;font-size:5.3px;color:#ee3a3a;">-328d 1h 33m</div>
<div class="t" style="left:330.3px;top:147.97px;width:22.5px;overflow:hidden;">Created</div>
<div class="t c" style="left:367.60px;top:147.97px;">0 %</div>
<div class="t c" style="left:410.40px;top:147.97px;">0h 0m</div>
<div class="t c" style="left:460.40px;top:147.97px;">0h 0m</div>
<div class="t" style="left:27.20px;top:159.75px;color:#ffffff;">Vacuum Cleaner Instruction Manual</div>
<div class="t" style="left:162.20px;top:159.75px;color:#ffffff;">4</div>
<div class="t" style="left:209.20px;top:159.75px;color:#ffffff;">Normal</div>
<div class="t c" style="left:258.20px;top:159.75px;color:#ffffff;">27/04/2007 16:49</div>
<div class="t c" style="left:301.80px;top:159.10px;font-size:5.3px;color:#e8425a;">-66d 18h 43m</div>
<div class="t" style="left:330.3px;top:159.75px;width:22.5px;overflow:hidden;color:#ffffff;">Created</div>
<div class="t c" style="left:367.60px;top:159.75px;color:#ffffff;">0 %</div>
<div class="t c" style="left:410.40px;top:159.75px;color:#ffffff;">0h 0m</div>
<div class="t c" style="left:460.40px;top:159.75px;color:#ffffff;">0h 0m</div>
<div class="t" style="left:9.80px;top:169.13px;color:#ffffff;">clean, tiding up, vacuum cleaner, dust</div>
<div class="t" style="left:27.20px;top:179.38px;">Take kids to the zoo</div>
<div class="t" style="left:162.20px;top:179.38px;">Family</div>
<div class="t" style="left:209.20px;top:179.38px;">Normal</div>
<div class="t c" style="left:258.20px;top:179.38px;">13/08/2006 12:00</div>
<div class="t c" style="left:301.80px;top:178.73px;font-size:5.3px;color:#ee3a3a;">-323d 23h</div>
<div class="t" style="left:330.3px;top:179.38px;width:22.5px;overflow:hidden;">Created</div>
<div class="t c" style="left:367.60px;top:179.38px;">0 %</div>
<div class="t c" style="left:410.40px;top:179.38px;">0h 0m</div>
<div class="t c" style="left:460.40px;top:179.38px;">0h 0m</div>
<div class="t" style="left:27.20px;top:191.16px;">Buy some dog's food</div>
<div class="t" style="left:162.20px;top:191.16px;">Family</div>
<div class="t" style="left:209.20px;top:191.16px;">Normal</div>
<div class="t c" style="left:258.20px;top:191.16px;">13/05/2006 17:00</div>
<div class="t c" style="left:301.80px;top:190.51px;font-size:5.3px;color:#ee3a3a;">-415d 18h</div>
<div class="t" style="left:330.3px;top:191.16px;width:22.5px;overflow:hidden;">Created</div>
<div class="t c" style="left:367.60px;top:191.16px;">0 %</div>
<div class="t c" style="left:410.40px;top:191.16px;">0h 0m</div>
<div class="t c" style="left:460.40px;top:191.16px;">0h 0m</div>
<div class="t" style="left:27.20px;top:202.94px;">Find granny's glasses</div>
<div class="t" style="left:162.20px;top:202.94px;">Family</div>
<div class="t" style="left:209.20px;top:202.94px;">Urgent</div>
<div class="t" style="left:330.3px;top:202.94px;width:22.5px;overflow:hidden;">Created</div>
<div class="t c" style="left:367.60px;top:202.94px;">0 %</div>
<div class="t c" style="left:410.40px;top:202.94px;">0h 0m</div>
<div class="t c" style="left:460.40px;top:202.94px;">0h 0m</div>
<div class="t" style="left:27.20px;top:214.72px;">Fix the tap</div>
<div class="t" style="left:162.20px;top:214.72px;">Chores</div>
<div class="t" style="left:209.20px;top:214.72px;">High</div>
<div class="t c" style="left:258.20px;top:214.72px;">03/07/2006 20:00</div>
<div class="t c" style="left:301.80px;top:214.07px;font-size:5.3px;color:#ee3a3a;">-364d 15h</div>
<div class="t" style="left:330.3px;top:214.72px;width:22.5px;overflow:hidden;">Created</div>
<div class="t c" style="left:367.60px;top:214.72px;">0 %</div>
<div class="t c" style="left:410.40px;top:214.72px;">0h 20m</div>
<div class="t c" style="left:460.40px;top:214.72px;">0h 0m</div>
<div class="t" style="left:27.20px;top:226.50px;">Clean the house</div>
<div class="t" style="left:162.20px;top:226.50px;">Chores</div>
<div class="t" style="left:209.20px;top:226.50px;">Normal</div>
<div class="t c" style="left:258.20px;top:226.50px;">14/05/2006 11:00</div>
<div class="t c" style="left:301.80px;top:225.85px;font-size:5.3px;color:#ee3a3a;">-415d 33m</div>
<div class="t" style="left:330.3px;top:226.50px;width:22.5px;overflow:hidden;">Created</div>
<div class="t c" style="left:367.60px;top:226.50px;">0 %</div>
<div class="t c" style="left:410.40px;top:226.50px;">0h 30m</div>
<div class="t c" style="left:460.40px;top:226.50px;">0h 0m</div>
<div class="t" style="left:27.20px;top:238.28px;">Wash the dishes</div>
<div class="t" style="left:162.20px;top:238.28px;">Chores</div>
<div class="t" style="left:209.20px;top:238.28px;">Normal</div>
<div class="t c" style="left:258.20px;top:238.28px;">11/05/2006 21:00</div>
<div class="t c" style="left:301.80px;top:237.63px;font-size:5.3px;color:#ee3a3a;">-417d 14h</div>
<div class="t" style="left:330.3px;top:238.28px;width:22.5px;overflow:hidden;">Created</div>
<div class="t c" style="left:367.60px;top:238.28px;">0 %</div>
<div class="t c" style="left:410.40px;top:238.28px;">0h 15m</div>
<div class="t c" style="left:460.40px;top:238.28px;">0h 0m</div>
<div class="t" style="left:27.20px;top:250.06px;">Mr. Jones</div>
<div class="t" style="left:162.20px;top:250.06px;">Calls</div>
<div class="t" style="left:209.20px;top:250.06px;">Normal</div>
<div class="t c" style="left:258.20px;top:250.06px;">21/09/2006 13:05</div>
<div class="t c" style="left:301.80px;top:249.41px;font-size:5.3px;color:#ee3a3a;">-284d 22h</div>
<div class="t" style="left:330.3px;top:250.06px;width:22.5px;overflow:hidden;">Put On H</div>
<div class="t c" style="left:367.60px;top:250.06px;">0 %</div>
<div class="t c" style="left:410.40px;top:250.06px;">0h 0m</div>
<div class="t c" style="left:460.40px;top:250.06px;">0h 0m</div>
<div class="t" style="left:27.20px;top:261.84px;">Mrs. Jones</div>
<div class="t" style="left:162.20px;top:261.84px;">Calls</div>
<div class="t" style="left:209.20px;top:261.84px;">Normal</div>
<div class="t c" style="left:258.20px;top:261.84px;">19/07/2006 12:20</div>
<div class="t c" style="left:301.80px;top:261.19px;font-size:5.3px;color:#ee3a3a;">-348d 23h</div>
<div class="t" style="left:330.3px;top:261.84px;width:22.5px;overflow:hidden;">Created</div>
<div class="t c" style="left:367.60px;top:261.84px;">0 %</div>
<div class="t c" style="left:410.40px;top:261.84px;">0h 0m</div>
<div class="t c" style="left:460.40px;top:261.84px;">0h 0m</div>
<div class="t" style="left:27.20px;top:273.62px;">Pizza Hut</div>
<div class="t" style="left:162.20px;top:273.62px;">Calls</div>
<div class="t" style="left:209.20px;top:273.62px;">Normal</div>
<div class="t c" style="left:258.20px;top:273.62px;">14/08/2006 19:00</div>
<div class="t c" style="left:301.80px;top:272.97px;font-size:5.3px;color:#ee3a3a;">-322d 16h</div>
<div class="t" style="left:330.3px;top:273.62px;width:22.5px;overflow:hidden;">Created</div>
<div class="t c" style="left:367.60px;top:273.62px;">0 %</div>
<div class="t c" style="left:410.40px;top:273.62px;">0h 0m</div>
<div class="t c" style="left:460.40px;top:273.62px;">0h 0m</div>
<div class="t" style="left:9.80px;top:283.00px;color:#2340e0;">2 beacon and cheese, 1 assorti</div>
<div class="t" style="left:27.20px;top:293.25px;">Sales department</div>
<div class="t" style="left:162.20px;top:293.25px;">Meetings</div>
<div class="t" style="left:209.20px;top:293.25px;">Normal</div>
<div class="t c" style="left:258.20px;top:293.25px;">12/05/2006 15:00</div>
<div class="t c" style="left:301.80px;top:292.60px;font-size:5.3px;color:#ee3a3a;">-416d 20h</div>
<div class="t" style="left:330.3px;top:293.25px;width:22.5px;overflow:hidden;">Open</div>
<div class="t c" style="left:367.60px;top:293.25px;color:#35503a;">50 %</div>
<div class="t c" style="left:410.40px;top:293.25px;">0h 30m</div>
<div class="t c" style="left:460.40px;top:293.25px;">0h 0m</div>
<div class="t" style="left:27.20px;top:305.03px;">Annual report</div>
<div class="t" style="left:162.20px;top:305.03px;">Meetings</div>
<div class="t" style="left:209.20px;top:305.03px;">Normal</div>
<div class="t c" style="left:258.20px;top:305.03px;">29/12/2006 11:00</div>
<div class="t c" style="left:301.80px;top:304.38px;font-size:5.3px;color:#ee3a3a;">-186d 33m</div>
<div class="t" style="left:330.3px;top:305.03px;width:22.5px;overflow:hidden;">Waiting</div>
<div class="t c" style="left:367.60px;top:305.03px;">10 %</div>
<div class="t c" style="left:410.40px;top:305.03px;">2h 0m</div>
<div class="t c" style="left:460.40px;top:305.03px;">0h 0m</div>
<div class="t" style="left:27.20px;top:316.81px;">Marketing plans discussion</div>
<div class="t" style="left:162.20px;top:316.81px;">Meetings</div>
<div class="t" style="left:209.20px;top:316.81px;">Normal</div>
<div class="t c" style="left:258.20px;top:316.81px;">01/06/2006 16:00</div>
<div class="t c" style="left:301.80px;top:316.16px;font-size:5.3px;color:#ee3a3a;">-396d 19h</div>
<div class="t" style="left:330.3px;top:316.81px;width:22.5px;overflow:hidden;">Created</div>
<div class="t c" style="left:367.60px;top:316.81px;">0 %</div>
<div class="t c" style="left:410.40px;top:316.81px;">1h 0m</div>
<div class="t c" style="left:460.40px;top:316.81px;">0h 0m</div>
<div class="t" style="left:27.20px;top:328.59px;">Answer customers' letters</div>
<div class="t" style="left:162.20px;top:328.59px;">Daily Tasks</div>
<div class="t" style="left:209.20px;top:328.59px;">Highest</div>
<div class="t c" style="left:258.20px;top:328.59px;">11/05/2006 13:00</div>
<div class="t c" style="left:301.80px;top:327.94px;font-size:5.3px;color:#ee3a3a;">-417d 22h</div>
<div class="t" style="left:330.3px;top:328.59px;width:22.5px;overflow:hidden;">Open</div>
<div class="t c" style="left:367.60px;top:328.59px;color:#35503a;">70 %</div>
<div class="t c" style="left:410.40px;top:328.59px;">0h 0m</div>
<div class="t c" style="left:460.40px;top:328.59px;">0h 0m</div>
<div class="t" style="left:27.20px;top:340.37px;">Monitor advertising campaign</div>
<div class="t" style="left:162.20px;top:340.37px;">Daily Tasks</div>
<div class="t" style="left:209.20px;top:340.37px;">Normal</div>
<div class="t c" style="left:258.20px;top:340.37px;">29/12/2006 19:00</div>
<div class="t c" style="left:301.80px;top:339.72px;font-size:5.3px;color:#ee3a3a;">-185d 16h</div>
<div class="t" style="left:330.3px;top:340.37px;width:22.5px;overflow:hidden;">Open</div>
<div class="t c" style="left:367.60px;top:340.37px;">25 %</div>
<div class="t c" style="left:410.40px;top:340.37px;">0h 0m</div>
<div class="t c" style="left:460.40px;top:340.37px;">0h 0m</div>
<div class="t" style="left:27.20px;top:352.15px;">Analyze customers' requests</div>
<div class="t" style="left:162.20px;top:352.15px;">Daily Tasks</div>
<div class="t" style="left:209.20px;top:352.15px;">Normal</div>
<div class="t c" style="left:258.20px;top:352.15px;">11/05/2006 12:45</div>
<div class="t c" style="left:301.80px;top:351.50px;font-size:5.3px;color:#ee3a3a;">-417d 22h</div>
<div class="t" style="left:330.3px;top:352.15px;width:22.5px;overflow:hidden;">Open</div>
<div class="t c" style="left:367.60px;top:352.15px;color:#35503a;">60 %</div>
<div class="t c" style="left:410.40px;top:352.15px;">0h 0m</div>
<div class="t c" style="left:460.40px;top:352.15px;">0h 0m</div>
<div class="t" style="left:29.20px;top:386.26px;color:#222;">Count: 24</div>
<div class="t" style="left:387.00px;top:386.26px;color:#222;">4h 35m</div>
<div class="t" style="left:439.00px;top:386.26px;color:#222;">0h 0m</div>
<div class="t" style="left:3.00px;top:398.46px;color:#111;">Note</div>
<div class="t" style="left:2.80px;top:408.30px;font-size:9.1px;color:#000;font-family:'Liberation Serif',serif;-webkit-text-stroke:0.25px;transform:scaleX(0.96);">clean, tiding up, vacuum cleaner, dust</div>
<div class="t" style="left:5.20px;top:446.46px;color:#111;">Note</div>
<div class="t" style="left:20.20px;top:446.46px;color:#111;">Search result</div>
<div class="t" style="left:487.80px;top:40.17px;font-size:5.7px;color:#111;">Categories Bar</div>
<div class="t" style="left:576.60px;top:63.83px;font-size:5.4px;color:#222;">U...</div>
<div class="t" style="left:589.80px;top:63.83px;font-size:5.4px;color:#222;">T...</div>
<div class="t" style="left:514.80px;top:71.82px;font-size:6.0px;color:#111;font-weight:bold;font-family:inherit;-webkit-text-stroke:0.22px;letter-spacing:0.1px;transform:scaleX(0.915);">Work</div>
<div class="t" style="left:584.30px;top:71.65px;font-size:6.2px;color:#111;font-weight:bold;font-family:inherit;-webkit-text-stroke:0.2px;transform:scaleX(0.88);">9</div>
<div class="t" style="left:594.90px;top:71.65px;font-size:6.2px;color:#111;font-weight:bold;font-family:inherit;-webkit-text-stroke:0.2px;transform:scaleX(0.88);">9</div>
<div class="t" style="left:514.80px;top:80.27px;font-size:6.0px;color:#111;font-weight:bold;font-family:inherit;-webkit-text-stroke:0.22px;letter-spacing:0.1px;transform:scaleX(0.915);">Daily Tasks</div>
<div class="t" style="left:584.30px;top:80.10px;font-size:6.2px;color:#111;font-weight:bold;font-family:inherit;-webkit-text-stroke:0.2px;transform:scaleX(0.88);">3</div>
<div class="t" style="left:594.90px;top:80.10px;font-size:6.2px;color:#111;font-weight:bold;font-family:inherit;-webkit-text-stroke:0.2px;transform:scaleX(0.88);">3</div>
<div class="t" style="left:514.80px;top:88.72px;font-size:6.0px;color:#111;font-weight:bold;font-family:inherit;-webkit-text-stroke:0.22px;letter-spacing:0.1px;transform:scaleX(0.915);">Meetings</div>
<div class="t" style="left:584.30px;top:88.55px;font-size:6.2px;color:#111;font-weight:bold;font-family:inherit;-webkit-text-stroke:0.2px;transform:scaleX(0.88);">3</div>
<div class="t" style="left:594.90px;top:88.55px;font-size:6.2px;color:#111;font-weight:bold;font-family:inherit;-webkit-text-stroke:0.2px;transform:scaleX(0.88);">3</div>
<div class="t" style="left:514.80px;top:97.17px;font-size:6.0px;color:#111;font-weight:bold;font-family:inherit;-webkit-text-stroke:0.22px;letter-spacing:0.1px;transform:scaleX(0.915);">Calls</div>
<div class="t" style="left:584.30px;top:97.00px;font-size:6.2px;color:#111;font-weight:bold;font-family:inherit;-webkit-text-stroke:0.2px;transform:scaleX(0.88);">3</div>
<div class="t" style="left:594.90px;top:97.00px;font-size:6.2px;color:#111;font-weight:bold;font-family:inherit;-webkit-text-stroke:0.2px;transform:scaleX(0.88);">3</div>
<div class="t" style="left:514.80px;top:105.62px;font-size:6.0px;color:#111;font-weight:bold;font-family:inherit;-webkit-text-stroke:0.22px;letter-spacing:0.1px;transform:scaleX(0.915);">Home</div>
<div class="t" style="left:584.30px;top:105.45px;font-size:6.2px;color:#111;font-weight:bold;font-family:inherit;-webkit-text-stroke:0.2px;transform:scaleX(0.88);">7</div>
<div class="t" style="left:594.90px;top:105.45px;font-size:6.2px;color:#111;font-weight:bold;font-family:inherit;-webkit-text-stroke:0.2px;transform:scaleX(0.88);">7</div>
<div class="t" style="left:514.80px;top:114.07px;font-size:6.0px;color:#111;font-weight:bold;font-family:inherit;-webkit-text-stroke:0.22px;letter-spacing:0.1px;transform:scaleX(0.915);">Chores</div>
<div class="t" style="left:584.30px;top:113.90px;font-size:6.2px;color:#111;font-weight:bold;font-family:inherit;-webkit-text-stroke:0.2px;transform:scaleX(0.88);">3</div>
<div class="t" style="left:594.90px;top:113.90px;font-size:6.2px;color:#111;font-weight:bold;font-family:inherit;-webkit-text-stroke:0.2px;transform:scaleX(0.88);">3</div>
<div class="t" style="left:514.80px;top:122.52px;font-size:6.0px;color:#111;font-weight:bold;font-family:inherit;-webkit-text-stroke:0.22px;letter-spacing:0.1px;transform:scaleX(0.915);">Family</div>
<div class="t" style="left:584.30px;top:122.35px;font-size:6.2px;color:#111;font-weight:bold;font-family:inherit;-webkit-text-stroke:0.2px;transform:scaleX(0.88);">3</div>
<div class="t" style="left:594.90px;top:122.35px;font-size:6.2px;color:#111;font-weight:bold;font-family:inherit;-webkit-text-stroke:0.2px;transform:scaleX(0.88);">3</div>
<div class="t" style="left:523.60px;top:130.97px;font-size:6.0px;color:#111;font-weight:bold;font-family:inherit;-webkit-text-stroke:0.22px;letter-spacing:0.1px;transform:scaleX(0.915);">My filing cabinet</div>
<div class="t" style="left:584.30px;top:130.80px;font-size:6.2px;color:#111;font-weight:bold;font-family:inherit;-webkit-text-stroke:0.2px;transform:scaleX(0.88);">1</div>
<div class="t" style="left:594.90px;top:130.80px;font-size:6.2px;color:#111;font-weight:bold;font-family:inherit;-webkit-text-stroke:0.2px;transform:scaleX(0.88);">1</div>
<div class="t" style="left:514.80px;top:140.24px;font-size:5.5px;color:#333;">Hobby</div>
<div class="t" style="left:583.20px;top:140.41px;font-size:5.3px;color:#333;">12</div>
<div class="t" style="left:593.90px;top:140.41px;font-size:5.3px;color:#333;">12</div>
<div class="t" style="left:514.80px;top:147.87px;font-size:6.0px;color:#111;font-weight:bold;font-family:inherit;-webkit-text-stroke:0.22px;letter-spacing:0.1px;transform:scaleX(0.915);">Reading</div>
<div class="t" style="left:584.30px;top:147.70px;font-size:6.2px;color:#111;font-weight:bold;font-family:inherit;-webkit-text-stroke:0.2px;transform:scaleX(0.88);">2</div>
<div class="t" style="left:594.90px;top:147.70px;font-size:6.2px;color:#111;font-weight:bold;font-family:inherit;-webkit-text-stroke:0.2px;transform:scaleX(0.88);">2</div>
<div class="t" style="left:514.80px;top:156.32px;font-size:6.0px;color:#111;font-weight:bold;font-family:inherit;-webkit-text-stroke:0.22px;letter-spacing:0.1px;transform:scaleX(0.915);">Having Fun</div>
<div class="t" style="left:584.30px;top:156.15px;font-size:6.2px;color:#111;font-weight:bold;font-family:inherit;-webkit-text-stroke:0.2px;transform:scaleX(0.88);">3</div>
<div class="t" style="left:594.90px;top:156.15px;font-size:6.2px;color:#111;font-weight:bold;font-family:inherit;-webkit-text-stroke:0.2px;transform:scaleX(0.88);">3</div>
<div class="t" style="left:514.80px;top:164.77px;font-size:6.0px;color:#111;font-weight:bold;font-family:inherit;-webkit-text-stroke:0.22px;letter-spacing:0.1px;transform:scaleX(0.915);">Drawing</div>
<div class="t" style="left:584.30px;top:164.60px;font-size:6.2px;color:#111;font-weight:bold;font-family:inherit;-webkit-text-stroke:0.2px;transform:scaleX(0.88);">3</div>
<div class="t" style="left:594.90px;top:164.60px;font-size:6.2px;color:#111;font-weight:bold;font-family:inherit;-webkit-text-stroke:0.2px;transform:scaleX(0.88);">3</div>
<div class="t" style="left:514.80px;top:174.04px;font-size:5.5px;color:#333;">Sport</div>
<div class="t" style="left:584.50px;top:174.21px;font-size:5.3px;color:#333;">4</div>
<div class="t" style="left:595.20px;top:174.21px;font-size:5.3px;color:#333;">4</div>
<div class="t" style="left:514.80px;top:182.49px;font-size:5.5px;color:#333;">Pictures</div>
<div class="t" style="left:487.80px;top:248.07px;font-size:5.7px;color:#111;">Filters Bar</div>
<div class="t" style="left:492.60px;top:260.06px;color:#b8b5a8;">Custom</div>
<div class="t" style="left:494px;top:271.86px;width:42.5px;overflow:hidden;color:#111;">Completion</div>
<div class="t" style="left:494px;top:281.68px;width:42.5px;overflow:hidden;color:#111;">Due Date</div>
<div class="t" style="left:494px;top:291.50px;width:42.5px;overflow:hidden;color:#111;">Status</div>
<div class="t" style="left:494px;top:301.32px;width:42.5px;overflow:hidden;color:#111;">Priority</div>
<div class="t" style="left:494px;top:311.14px;width:42.5px;overflow:hidden;color:#111;">Task Name</div>
<div class="t" style="left:494px;top:320.96px;width:42.5px;overflow:hidden;color:#111;">Date Created</div>
<div class="t" style="left:494px;top:330.78px;width:42.5px;overflow:hidden;color:#111;">Date Last Modifi</div>
<div class="t" style="left:494px;top:340.60px;width:42.5px;overflow:hidden;color:#111;">Date Opened</div>
<div class="t" style="left:494px;top:350.42px;width:42.5px;overflow:hidden;color:#111;">Date Completed</div>
</div>
</body></html>
